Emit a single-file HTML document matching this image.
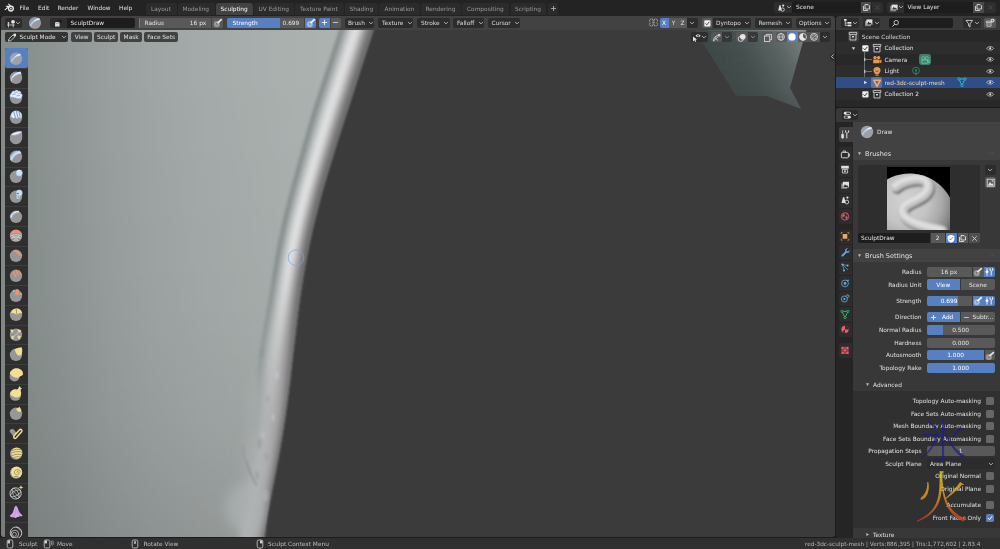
<!DOCTYPE html>
<html lang="en"><head><meta charset="utf-8"><title>Blender - Sculpting</title>
<style>
*{box-sizing:border-box;margin:0;padding:0}
html,body{width:1000px;height:549px;overflow:hidden;background:#1c1c1c}
body{font-family:"DejaVu Sans","Liberation Sans",sans-serif;font-size:5.85px;color:#e4e4e4;position:relative}
#root{position:absolute;left:0;top:0;width:1000px;height:549px;will-change:transform;overflow:hidden}
.b{position:absolute;display:block}
.t{position:absolute;white-space:nowrap;line-height:10px;height:10px;display:block}
.wm{position:absolute;white-space:nowrap;font-family:"Liberation Serif","Noto Serif CJK SC","Noto Sans CJK SC",serif;display:block}
</style></head>
<body>
<div id="root">
<div class="b" style="left:0px;top:0px;width:1000px;height:15.5px;background:#232323;border-radius:0px;"></div>
<svg class="b" style="left:4px;top:2.5px;" width="12" height="10" viewBox="0 0 12 10"><g fill="none" stroke="#e6e6e6" stroke-width="1.1" stroke-linecap="round"><path d="M1.2,6.6 L5.2,3.4 M2.6,3.4 L6.2,3.4 M4.6,1.2 L7.4,3.6"/></g><circle cx="6.9" cy="5.6" r="3.1" fill="#e6e6e6"/><circle cx="6.9" cy="5.6" r="1.7" fill="#232323"/><circle cx="6.9" cy="5.6" r="0.9" fill="#e6e6e6"/></svg>
<span class="t" style="top:2.6px;left:19.5px;color:#e0e0e0;">File</span>
<span class="t" style="top:2.6px;left:38px;color:#e0e0e0;">Edit</span>
<span class="t" style="top:2.6px;left:57.5px;color:#e0e0e0;">Render</span>
<span class="t" style="top:2.6px;left:87.5px;color:#e0e0e0;">Window</span>
<span class="t" style="top:2.6px;left:119px;color:#e0e0e0;">Help</span>
<div class="b" style="left:146px;top:3px;width:31px;height:11.6px;background:#2b2b2b;border-radius:2.5px 2.5px 0 0;"></div>
<span class="t" style="top:3.6px;left:151px;color:#999999;">Layout</span>
<div class="b" style="left:178px;top:3px;width:36.5px;height:11.6px;background:#2b2b2b;border-radius:2.5px 2.5px 0 0;"></div>
<span class="t" style="top:3.6px;left:182.5px;color:#999999;">Modeling</span>
<div class="b" style="left:216px;top:3px;width:36.5px;height:11.6px;background:#424242;border-radius:2.5px 2.5px 0 0;"></div>
<span class="t" style="top:3.6px;left:220.5px;color:#ffffff;">Sculpting</span>
<div class="b" style="left:254px;top:3px;width:40px;height:11.6px;background:#2b2b2b;border-radius:2.5px 2.5px 0 0;"></div>
<span class="t" style="top:3.6px;left:258.5px;color:#999999;">UV Editing</span>
<div class="b" style="left:295px;top:3px;width:49px;height:11.6px;background:#2b2b2b;border-radius:2.5px 2.5px 0 0;"></div>
<span class="t" style="top:3.6px;left:300px;color:#999999;">Texture Paint</span>
<div class="b" style="left:345px;top:3px;width:32.5px;height:11.6px;background:#2b2b2b;border-radius:2.5px 2.5px 0 0;"></div>
<span class="t" style="top:3.6px;left:349.5px;color:#999999;">Shading</span>
<div class="b" style="left:379px;top:3px;width:40.5px;height:11.6px;background:#2b2b2b;border-radius:2.5px 2.5px 0 0;"></div>
<span class="t" style="top:3.6px;left:384.5px;color:#999999;">Animation</span>
<div class="b" style="left:421px;top:3px;width:40px;height:11.6px;background:#2b2b2b;border-radius:2.5px 2.5px 0 0;"></div>
<span class="t" style="top:3.6px;left:425.5px;color:#999999;">Rendering</span>
<div class="b" style="left:462px;top:3px;width:47px;height:11.6px;background:#2b2b2b;border-radius:2.5px 2.5px 0 0;"></div>
<span class="t" style="top:3.6px;left:467px;color:#999999;">Compositing</span>
<div class="b" style="left:510.5px;top:3px;width:35.5px;height:11.6px;background:#2b2b2b;border-radius:2.5px 2.5px 0 0;"></div>
<span class="t" style="top:3.6px;left:515px;color:#999999;">Scripting</span>
<div class="b" style="left:547.5px;top:3px;width:10.5px;height:11.6px;background:#2b2b2b;border-radius:2.5px 2.5px 0 0;"></div>
<svg class="b" style="left:549.5px;top:5.2px;" width="7" height="7" viewBox="0 0 7 7"><path d="M3.5,1 V6 M1,3.5 H6" stroke="#bbbbbb" stroke-width="0.8" fill="none"/></svg>
<div class="b" style="left:774px;top:1.5px;width:17.5px;height:11.5px;background:#2e2e2e;border-radius:2.5px 0 0 2.5px;"></div>
<svg class="b" style="left:776px;top:2.5px;" width="10" height="10" viewBox="0 0 10 10"><path d="M2.2,7.6 L3.4,2.2 L4.6,2.2 L5.6,7.6 Z" fill="#dddddd"/><circle cx="7.2" cy="2.6" r="1.1" fill="#dddddd"/><circle cx="6.6" cy="6.6" r="1.7" fill="none" stroke="#dddddd" stroke-width="0.8"/></svg>
<svg class="b" style="left:785.5px;top:4.4px;" width="6" height="6" viewBox="0 0 6 6"><path d="M1.3,2.2 L3,3.9 L4.7,2.2" fill="none" stroke="#c8c8c8" stroke-width="0.8" stroke-linecap="round" stroke-linejoin="round"/></svg>
<div class="b" style="left:792px;top:1.5px;width:68px;height:11.5px;background:#1d1d1d;border-radius:0px;"></div>
<span class="t" style="top:2.4px;left:796px;color:#e0e0e0;">Scene</span>
<div class="b" style="left:860.5px;top:1.5px;width:10.5px;height:11.5px;background:#4a4a4a;border-radius:0px;"></div>
<svg class="b" style="left:861.5px;top:3px;" width="9" height="9" viewBox="0 0 9 9"><path d="M1.5,3 V7.5 H6" fill="none" stroke="#d8d8d8" stroke-width="0.9"/><path d="M3,1.5 H6 L7.5,3 V6 H3 Z" fill="none" stroke="#d8d8d8" stroke-width="0.9"/></svg>
<div class="b" style="left:871.5px;top:1.5px;width:11.5px;height:11.5px;background:#2e2e2e;border-radius:0 2.5px 2.5px 0;"></div>
<svg class="b" style="left:873.5px;top:4px;" width="7" height="7" viewBox="0 0 7 7"><path d="M1.5,1.5 L5.5,5.5 M5.5,1.5 L1.5,5.5" stroke="#555" stroke-width="0.8"/></svg>
<div class="b" style="left:887px;top:1.5px;width:16.5px;height:11.5px;background:#2e2e2e;border-radius:2.5px 0 0 2.5px;"></div>
<svg class="b" style="left:888.5px;top:2.5px;" width="10" height="10" viewBox="0 0 10 10"><rect x="1.2" y="3" width="6" height="5.4" fill="#888"/><rect x="2.6" y="1.6" width="6" height="5.4" fill="#e0e0e0"/><path d="M3,6.6 L4.8,3.8 L6,5.4 L6.8,4.6 L8.2,6.6 Z" fill="#2e2e2e"/></svg>
<svg class="b" style="left:897.5px;top:4.4px;" width="6" height="6" viewBox="0 0 6 6"><path d="M1.3,2.2 L3,3.9 L4.7,2.2" fill="none" stroke="#c8c8c8" stroke-width="0.8" stroke-linecap="round" stroke-linejoin="round"/></svg>
<div class="b" style="left:904px;top:1.5px;width:68.5px;height:11.5px;background:#1d1d1d;border-radius:0px;"></div>
<span class="t" style="top:2.4px;left:907.5px;color:#e0e0e0;">View Layer</span>
<div class="b" style="left:973px;top:1.5px;width:10.5px;height:11.5px;background:#4a4a4a;border-radius:0px;"></div>
<svg class="b" style="left:974px;top:3px;" width="9" height="9" viewBox="0 0 9 9"><path d="M1.5,3 V7.5 H6" fill="none" stroke="#d8d8d8" stroke-width="0.9"/><path d="M3,1.5 H6 L7.5,3 V6 H3 Z" fill="none" stroke="#d8d8d8" stroke-width="0.9"/></svg>
<div class="b" style="left:984px;top:1.5px;width:12px;height:11.5px;background:#2e2e2e;border-radius:0 2.5px 2.5px 0;"></div>
<svg class="b" style="left:986.5px;top:4px;" width="7" height="7" viewBox="0 0 7 7"><path d="M1.5,1.5 L5.5,5.5 M5.5,1.5 L1.5,5.5" stroke="#555" stroke-width="0.8"/></svg>
<div class="b" style="left:1px;top:15.5px;width:833.9px;height:14.5px;background:#424242;border-radius:3px 3px 0 0;"></div>
<div class="b" style="left:5px;top:18px;width:16.5px;height:9.8px;background:#2c2c2c;border-radius:2px;"></div>
<svg class="b" style="left:6px;top:18.5px;" width="10" height="9" viewBox="0 0 10 9"><path d="M1,6 H8.6 M1.4,4 H3.6 M2.5,3 V8.4 M7.2,5 V8.4" stroke="#dcdcdc" stroke-width="0.8" fill="none"/><circle cx="7" cy="2.8" r="1.9" fill="#e6e6e6"/></svg>
<svg class="b" style="left:15.2px;top:20.2px;" width="6" height="6" viewBox="0 0 6 6"><path d="M1.3,2.2 L3,3.9 L4.7,2.2" fill="none" stroke="#c8c8c8" stroke-width="0.8" stroke-linecap="round" stroke-linejoin="round"/></svg>
<svg class="b" style="left:28.4px;top:15.6px;" width="14" height="14" viewBox="0 0 14 14"><circle cx="7" cy="7" r="6.1" fill="#9a9a9e"/><path d="M1.6,9.8 C3.2,6 6.4,3.2 11,1.8 L12.2,3.8 C8,4.6 4.8,6.8 2.6,10.8 Z" fill="#a9cdf0"/><path d="M5.6,5.2 C7.2,3.8 9,2.8 11,2.3 L11.6,3.3 C9.4,3.7 7.4,4.3 5.6,5.2 Z" fill="#ffffff"/></svg>
<div class="b" style="left:50px;top:18px;width:16.5px;height:9.8px;background:#2e2e2e;border-radius:2px 0 0 2px;"></div>
<svg class="b" style="left:53px;top:18.8px;" width="10" height="8.5" viewBox="0 0 10 8.5"><path d="M2,7.4 V4 C2,2.6 6.6,2.6 6.6,4 V7.4 Z" fill="#dcdcdc"/><path d="M4.4,1 H8.4 V4.6" fill="#1d1d1d" stroke="#1d1d1d" stroke-width="0.5"/><path d="M2.4,5 C3.6,3.8 5.4,3.8 6.4,5" stroke="#777" stroke-width="0.6" fill="none"/></svg>
<div class="b" style="left:67px;top:18px;width:68px;height:9.8px;background:#1d1d1d;border-radius:0 2px 2px 0;"></div>
<span class="t" style="top:18.1px;left:70.5px;">SculptDraw</span>
<div class="b" style="left:138.5px;top:18px;width:72.5px;height:9.8px;background:#595959;border-radius:2px 0 0 2px;"></div>
<div class="b" style="left:138.5px;top:18px;width:1px;height:9.8px;background:#5680c2;border-radius:2px 0 0 2px;"></div>
<span class="t" style="top:18.1px;left:144.5px;">Radius</span>
<span class="t" style="top:18.1px;right:793.7px;">16 px</span>
<div class="b" style="left:211.5px;top:18px;width:11.5px;height:9.8px;background:#595959;border-radius:0 2px 2px 0;"></div>
<svg class="b" style="left:212.5px;top:18.3px;" width="10" height="9.5" viewBox="0 0 10 9.5"><circle cx="3.8" cy="6.2" r="3.1" fill="#e6e6e6" opacity="0.38"/><circle cx="3.8" cy="6.2" r="1.9" fill="none" stroke="#e6e6e6" stroke-width="0.5" opacity="0.4"/><path d="M4.7,4.8 L8.3,1.7" stroke="#e6e6e6" stroke-width="1.7" stroke-linecap="round"/><circle cx="4" cy="5.7" r="0.5" fill="#383838"/></svg>
<div class="b" style="left:226.5px;top:18px;width:77.5px;height:9.8px;background:#595959;border-radius:2px 0 0 2px;"></div>
<div class="b" style="left:226.5px;top:18px;width:53.8px;height:9.8px;background:#5680c2;border-radius:2px 0 0 2px;"></div>
<span class="t" style="top:18.1px;left:232.5px;color:#ffffff;">Strength</span>
<span class="t" style="top:18.1px;right:700.7px;">0.699</span>
<div class="b" style="left:304.7px;top:18px;width:11.5px;height:9.8px;background:#5680c2;border-radius:0 2px 2px 0;"></div>
<svg class="b" style="left:305.7px;top:18.3px;" width="10" height="9.5" viewBox="0 0 10 9.5"><circle cx="3.8" cy="6.2" r="3.1" fill="#ffffff" opacity="0.38"/><circle cx="3.8" cy="6.2" r="1.9" fill="none" stroke="#ffffff" stroke-width="0.5" opacity="0.4"/><path d="M4.7,4.8 L8.3,1.7" stroke="#ffffff" stroke-width="1.7" stroke-linecap="round"/><circle cx="4" cy="5.7" r="0.5" fill="#383838"/></svg>
<div class="b" style="left:319px;top:18px;width:11px;height:9.8px;background:#5680c2;border-radius:2px 0 0 2px;"></div>
<svg class="b" style="left:321px;top:19.4px;" width="7" height="7" viewBox="0 0 7 7"><path d="M3.5,0.8 V6.2 M0.8,3.5 H6.2" stroke="#fff" stroke-width="0.8"/></svg>
<div class="b" style="left:330.5px;top:18px;width:10.3px;height:9.8px;background:#595959;border-radius:0 2px 2px 0;"></div>
<svg class="b" style="left:332px;top:19.4px;" width="7" height="7" viewBox="0 0 7 7"><path d="M0.8,3.5 H6.2" stroke="#ddd" stroke-width="0.8"/></svg>
<div class="b" style="left:344.5px;top:18px;width:29.5px;height:9.8px;background:#2c2c2c;border-radius:2px;"></div>
<span class="t" style="top:18.1px;left:348px;color:#dddddd;">Brush</span>
<svg class="b" style="left:367.5px;top:20.3px;" width="6" height="6" viewBox="0 0 6 6"><path d="M1.3,2.2 L3,3.9 L4.7,2.2" fill="none" stroke="#c8c8c8" stroke-width="0.8" stroke-linecap="round" stroke-linejoin="round"/></svg>
<div class="b" style="left:378px;top:18px;width:35px;height:9.8px;background:#2c2c2c;border-radius:2px;"></div>
<span class="t" style="top:18.1px;left:382px;color:#dddddd;">Texture</span>
<svg class="b" style="left:406.5px;top:20.3px;" width="6" height="6" viewBox="0 0 6 6"><path d="M1.3,2.2 L3,3.9 L4.7,2.2" fill="none" stroke="#c8c8c8" stroke-width="0.8" stroke-linecap="round" stroke-linejoin="round"/></svg>
<div class="b" style="left:417px;top:18px;width:32.5px;height:9.8px;background:#2c2c2c;border-radius:2px;"></div>
<span class="t" style="top:18.1px;left:421px;color:#dddddd;">Stroke</span>
<svg class="b" style="left:443px;top:20.3px;" width="6" height="6" viewBox="0 0 6 6"><path d="M1.3,2.2 L3,3.9 L4.7,2.2" fill="none" stroke="#c8c8c8" stroke-width="0.8" stroke-linecap="round" stroke-linejoin="round"/></svg>
<div class="b" style="left:453px;top:18px;width:31px;height:9.8px;background:#2c2c2c;border-radius:2px;"></div>
<span class="t" style="top:18.1px;left:457px;color:#dddddd;">Falloff</span>
<svg class="b" style="left:477.5px;top:20.3px;" width="6" height="6" viewBox="0 0 6 6"><path d="M1.3,2.2 L3,3.9 L4.7,2.2" fill="none" stroke="#c8c8c8" stroke-width="0.8" stroke-linecap="round" stroke-linejoin="round"/></svg>
<div class="b" style="left:488px;top:18px;width:32px;height:9.8px;background:#2c2c2c;border-radius:2px;"></div>
<span class="t" style="top:18.1px;left:491.5px;color:#dddddd;">Cursor</span>
<svg class="b" style="left:513.5px;top:20.3px;" width="6" height="6" viewBox="0 0 6 6"><path d="M1.3,2.2 L3,3.9 L4.7,2.2" fill="none" stroke="#c8c8c8" stroke-width="0.8" stroke-linecap="round" stroke-linejoin="round"/></svg>
<div class="b" style="left:712.5px;top:18px;width:38px;height:9.8px;background:#2c2c2c;border-radius:0 2px 2px 0;"></div>
<span class="t" style="top:18.1px;left:716px;color:#dddddd;">Dyntopo</span>
<svg class="b" style="left:744px;top:20.3px;" width="6" height="6" viewBox="0 0 6 6"><path d="M1.3,2.2 L3,3.9 L4.7,2.2" fill="none" stroke="#c8c8c8" stroke-width="0.8" stroke-linecap="round" stroke-linejoin="round"/></svg>
<div class="b" style="left:755px;top:18px;width:36.5px;height:9.8px;background:#2c2c2c;border-radius:2px;"></div>
<span class="t" style="top:18.1px;left:758.5px;color:#dddddd;">Remesh</span>
<svg class="b" style="left:785px;top:20.3px;" width="6" height="6" viewBox="0 0 6 6"><path d="M1.3,2.2 L3,3.9 L4.7,2.2" fill="none" stroke="#c8c8c8" stroke-width="0.8" stroke-linecap="round" stroke-linejoin="round"/></svg>
<div class="b" style="left:795.5px;top:18px;width:35px;height:9.8px;background:#2c2c2c;border-radius:2px;"></div>
<span class="t" style="top:18.1px;left:799px;color:#dddddd;">Options</span>
<svg class="b" style="left:824px;top:20.3px;" width="6" height="6" viewBox="0 0 6 6"><path d="M1.3,2.2 L3,3.9 L4.7,2.2" fill="none" stroke="#c8c8c8" stroke-width="0.8" stroke-linecap="round" stroke-linejoin="round"/></svg>
<svg class="b" style="left:648px;top:18.3px;" width="11" height="9.5" viewBox="0 0 11 9.5"><path d="M5,1.4 C3.6,0.6 1.4,1 1.4,2.6 C1.4,3.6 2.2,3.8 2.2,4.6 C2.2,5.4 1.2,5.6 1.4,6.8 C1.6,8.2 3.8,8.4 5,7.4 Z M6,1.4 C7.4,0.6 9.6,1 9.6,2.6 C9.6,3.6 8.8,3.8 8.8,4.6 C8.8,5.4 9.8,5.6 9.6,6.8 C9.4,8.2 7.2,8.4 6,7.4 Z" fill="none" stroke="#d0d0d0" stroke-width="0.7" stroke-dasharray="1.2 0.5"/></svg>
<div class="b" style="left:659.5px;top:18px;width:9.2px;height:9.8px;background:#5680c2;border-radius:2px 0 0 2px;"></div>
<span class="t" style="top:18.1px;left:614.1px;width:100px;text-align:center;color:#ffffff;">X</span>
<div class="b" style="left:669.2px;top:18px;width:8.6px;height:9.8px;background:#595959;border-radius:0px;"></div>
<span class="t" style="top:18.1px;left:623.5px;width:100px;text-align:center;color:#e0e0e0;">Y</span>
<div class="b" style="left:678.3px;top:18px;width:8.4px;height:9.8px;background:#595959;border-radius:0px;"></div>
<span class="t" style="top:18.1px;left:632.5px;width:100px;text-align:center;color:#e0e0e0;">Z</span>
<div class="b" style="left:687.2px;top:18px;width:10.5px;height:9.8px;background:#2c2c2c;border-radius:0 2px 2px 0;"></div>
<svg class="b" style="left:689.4px;top:20.3px;" width="6" height="6" viewBox="0 0 6 6"><path d="M1.3,2.2 L3,3.9 L4.7,2.2" fill="none" stroke="#c8c8c8" stroke-width="0.8" stroke-linecap="round" stroke-linejoin="round"/></svg>
<div class="b" style="left:702px;top:18px;width:10px;height:9.8px;background:#595959;border-radius:2px 0 0 2px;"></div>
<svg class="b" style="left:703.7px;top:19.6px;" width="7" height="7" viewBox="0 0 7 7"><rect x="0.3" y="0.3" width="6.2" height="6.2" rx="0.8" fill="#f0f0f0"/><path d="M1.5,3.4 L2.9,4.8 L5.3,1.9" stroke="#333" stroke-width="0.9" fill="none"/></svg>
<svg class="b" style="left:1px;top:29.5px;border-radius:0 0 3px 3px" width="833.9" height="507.5" viewBox="1 29.5 833.9 507.5"><defs>
<linearGradient id="gv" gradientUnits="userSpaceOnUse" x1="0" y1="0" x2="375" y2="0"><stop offset="0.000" stop-color="#848c8a"/><stop offset="0.080" stop-color="#89918f"/><stop offset="0.160" stop-color="#8e9594"/><stop offset="0.293" stop-color="#989f9e"/><stop offset="0.400" stop-color="#9ea5a4"/><stop offset="0.533" stop-color="#a4aaa9"/><stop offset="0.800" stop-color="#aab1af"/><stop offset="1.000" stop-color="#aeb4b3"/></linearGradient>
<linearGradient id="gh" gradientUnits="userSpaceOnUse" x1="0" y1="60" x2="0" y2="540"><stop offset="0" stop-color="#000" stop-opacity="0"/><stop offset="0.5" stop-color="#000" stop-opacity="0.024"/><stop offset="0.75" stop-color="#000" stop-opacity="0.055"/><stop offset="1" stop-color="#000" stop-opacity="0.115"/></linearGradient>
<linearGradient id="gt" gradientUnits="userSpaceOnUse" x1="715" y1="85" x2="805" y2="40"><stop offset="0" stop-color="#3c4745"/><stop offset="0.4" stop-color="#465150"/><stop offset="0.75" stop-color="#5e6867"/><stop offset="1" stop-color="#7a8281"/></linearGradient>
<linearGradient id="gtf" x1="0" y1="0" x2="0" y2="1"><stop offset="0" stop-color="#fff" stop-opacity="1"/><stop offset="0.7" stop-color="#fff" stop-opacity="0.9"/><stop offset="1" stop-color="#fff" stop-opacity="0.7"/></linearGradient>
<mask id="mt"><rect x="680" y="28" width="160" height="85" fill="url(#gtf)"/></mask>
<filter id="b6" x="-50%" y="-50%" width="200%" height="200%"><feGaussianBlur stdDeviation="6"/></filter><filter id="b1" x="-20%" y="-5%" width="140%" height="110%"><feGaussianBlur stdDeviation="1.3"/></filter>
<filter id="b0" x="-5%" y="-5%" width="110%" height="110%"><feGaussianBlur stdDeviation="0.8"/></filter><filter id="b00" x="-5%" y="-5%" width="110%" height="110%"><feGaussianBlur stdDeviation="0.6"/></filter>
<clipPath id="cb"><path d="M374.3,27.0 C373.2,30.4 369.8,40.7 367.6,47.6 C365.4,54.4 363.2,61.3 361.0,68.1 C358.8,75.0 356.6,81.8 354.4,88.7 C352.2,95.5 350.0,102.4 347.7,109.2 C345.5,116.1 343.3,122.9 341.1,129.8 C338.9,136.7 336.7,143.5 334.6,150.4 C332.4,157.2 330.3,164.1 328.3,170.9 C326.2,177.8 324.2,184.6 322.3,191.5 C320.4,198.3 318.6,205.2 316.8,212.0 C315.1,218.9 313.4,225.7 311.9,232.6 C310.3,239.5 308.9,246.3 307.5,253.2 C306.2,260.0 304.9,266.9 303.7,273.7 C302.6,280.6 301.5,287.4 300.5,294.3 C299.5,301.1 298.5,308.0 297.7,314.8 C296.8,321.7 296.0,328.5 295.2,335.4 C294.3,342.3 293.6,349.1 292.8,356.0 C292.0,362.8 291.3,369.7 290.5,376.5 C289.6,383.4 288.8,390.2 287.9,397.1 C287.0,403.9 286.1,410.8 285.1,417.6 C284.1,424.5 283.0,431.3 281.8,438.2 C280.7,445.1 279.4,451.9 278.2,458.8 C276.9,465.6 275.5,472.5 274.2,479.3 C272.9,486.2 271.5,493.0 270.2,499.9 C269.0,506.7 267.7,513.6 266.7,520.4 C265.7,527.3 264.6,537.6 264.2,541.0 L-5,545 L-5,20 Z"/></clipPath>
<linearGradient id="s0" gradientUnits="userSpaceOnUse" x1="0" y1="29" x2="0" y2="538"><stop offset="0" stop-color="#808888"/><stop offset="0.45" stop-color="#808888"/><stop offset="0.6" stop-color="#8e9595"/><stop offset="0.76" stop-color="#9ba2a2"/><stop offset="1" stop-color="#9ba2a2"/></linearGradient><linearGradient id="s1" gradientUnits="userSpaceOnUse" x1="0" y1="29" x2="0" y2="538"><stop offset="0" stop-color="#8f9595"/><stop offset="0.45" stop-color="#8f9595"/><stop offset="0.6" stop-color="#989e9e"/><stop offset="0.76" stop-color="#a1a6a6"/><stop offset="1" stop-color="#a1a6a6"/></linearGradient><linearGradient id="s2" gradientUnits="userSpaceOnUse" x1="0" y1="29" x2="0" y2="538"><stop offset="0" stop-color="#a1a6a6"/><stop offset="0.45" stop-color="#a1a6a6"/><stop offset="0.6" stop-color="#a4a8a9"/><stop offset="0.76" stop-color="#a7abab"/><stop offset="1" stop-color="#a7abab"/></linearGradient><linearGradient id="s3" gradientUnits="userSpaceOnUse" x1="0" y1="29" x2="0" y2="538"><stop offset="0" stop-color="#b4b8b8"/><stop offset="0.45" stop-color="#b4b8b8"/><stop offset="0.6" stop-color="#b0b4b4"/><stop offset="0.76" stop-color="#adb0b0"/><stop offset="1" stop-color="#adb0b0"/></linearGradient><linearGradient id="s4" gradientUnits="userSpaceOnUse" x1="0" y1="29" x2="0" y2="538"><stop offset="0" stop-color="#c8cbcb"/><stop offset="0.45" stop-color="#c8cbcb"/><stop offset="0.6" stop-color="#bcbfbf"/><stop offset="0.76" stop-color="#b1b3b4"/><stop offset="1" stop-color="#b1b3b4"/></linearGradient><linearGradient id="s5" gradientUnits="userSpaceOnUse" x1="0" y1="29" x2="0" y2="538"><stop offset="0" stop-color="#d6d8d8"/><stop offset="0.45" stop-color="#d6d8d8"/><stop offset="0.6" stop-color="#c3c5c5"/><stop offset="0.76" stop-color="#b0b2b3"/><stop offset="1" stop-color="#b0b2b3"/></linearGradient><linearGradient id="s6" gradientUnits="userSpaceOnUse" x1="0" y1="29" x2="0" y2="538"><stop offset="0" stop-color="#e0e1e1"/><stop offset="0.45" stop-color="#e0e1e1"/><stop offset="0.6" stop-color="#c8c9c9"/><stop offset="0.76" stop-color="#afb1b2"/><stop offset="1" stop-color="#afb1b2"/></linearGradient><linearGradient id="s7" gradientUnits="userSpaceOnUse" x1="0" y1="29" x2="0" y2="538"><stop offset="0" stop-color="#dbdbdc"/><stop offset="0.45" stop-color="#dbdbdc"/><stop offset="0.6" stop-color="#c4c5c5"/><stop offset="0.76" stop-color="#aeaeaf"/><stop offset="1" stop-color="#aeaeaf"/></linearGradient><linearGradient id="s8" gradientUnits="userSpaceOnUse" x1="0" y1="29" x2="0" y2="538"><stop offset="0" stop-color="#d0cfd0"/><stop offset="0.45" stop-color="#d0cfd0"/><stop offset="0.6" stop-color="#bdbdbe"/><stop offset="0.76" stop-color="#ababac"/><stop offset="1" stop-color="#ababac"/></linearGradient><linearGradient id="s9" gradientUnits="userSpaceOnUse" x1="0" y1="29" x2="0" y2="538"><stop offset="0" stop-color="#b7b6b8"/><stop offset="0.45" stop-color="#b7b6b8"/><stop offset="0.6" stop-color="#afafb0"/><stop offset="0.76" stop-color="#a8a7a9"/><stop offset="1" stop-color="#a8a7a9"/></linearGradient><linearGradient id="s10" gradientUnits="userSpaceOnUse" x1="0" y1="29" x2="0" y2="538"><stop offset="0" stop-color="#9f9d9f"/><stop offset="0.45" stop-color="#9f9d9f"/><stop offset="0.6" stop-color="#a09ea0"/><stop offset="0.76" stop-color="#a1a0a2"/><stop offset="1" stop-color="#a1a0a2"/></linearGradient><linearGradient id="s11" gradientUnits="userSpaceOnUse" x1="0" y1="29" x2="0" y2="538"><stop offset="0" stop-color="#8a888a"/><stop offset="0.45" stop-color="#8a888a"/><stop offset="0.6" stop-color="#919092"/><stop offset="0.76" stop-color="#999799"/><stop offset="1" stop-color="#999799"/></linearGradient><linearGradient id="s12" gradientUnits="userSpaceOnUse" x1="0" y1="29" x2="0" y2="538"><stop offset="0" stop-color="#767476"/><stop offset="0.45" stop-color="#767476"/><stop offset="0.6" stop-color="#807e80"/><stop offset="0.76" stop-color="#8b898b"/><stop offset="1" stop-color="#8b898b"/></linearGradient><linearGradient id="s13" gradientUnits="userSpaceOnUse" x1="0" y1="29" x2="0" y2="538"><stop offset="0" stop-color="#696769"/><stop offset="0.45" stop-color="#696769"/><stop offset="0.6" stop-color="#6f6e6f"/><stop offset="0.76" stop-color="#767576"/><stop offset="1" stop-color="#767576"/></linearGradient>
</defs>
<rect x="0" y="29" width="835" height="510" fill="#3b3b3b"/>
<g mask="url(#mt)"><path d="M692,25 L808,25 L801.2,47.4 L790,87.2 L801.2,108.6 L766.5,95.6 L736,95.3 Z" fill="url(#gt)" filter="url(#b00)"/></g>
<g filter="url(#b0)"><path d="M374.3,27.0 C373.2,30.4 369.8,40.7 367.6,47.6 C365.4,54.4 363.2,61.3 361.0,68.1 C358.8,75.0 356.6,81.8 354.4,88.7 C352.2,95.5 350.0,102.4 347.7,109.2 C345.5,116.1 343.3,122.9 341.1,129.8 C338.9,136.7 336.7,143.5 334.6,150.4 C332.4,157.2 330.3,164.1 328.3,170.9 C326.2,177.8 324.2,184.6 322.3,191.5 C320.4,198.3 318.6,205.2 316.8,212.0 C315.1,218.9 313.4,225.7 311.9,232.6 C310.3,239.5 308.9,246.3 307.5,253.2 C306.2,260.0 304.9,266.9 303.7,273.7 C302.6,280.6 301.5,287.4 300.5,294.3 C299.5,301.1 298.5,308.0 297.7,314.8 C296.8,321.7 296.0,328.5 295.2,335.4 C294.3,342.3 293.6,349.1 292.8,356.0 C292.0,362.8 291.3,369.7 290.5,376.5 C289.6,383.4 288.8,390.2 287.9,397.1 C287.0,403.9 286.1,410.8 285.1,417.6 C284.1,424.5 283.0,431.3 281.8,438.2 C280.7,445.1 279.4,451.9 278.2,458.8 C276.9,465.6 275.5,472.5 274.2,479.3 C272.9,486.2 271.5,493.0 270.2,499.9 C269.0,506.7 267.7,513.6 266.7,520.4 C265.7,527.3 264.6,537.6 264.2,541.0 L-5,545 L-5,20 Z" fill="url(#gv)"/><path d="M374.3,27.0 C373.2,30.4 369.8,40.7 367.6,47.6 C365.4,54.4 363.2,61.3 361.0,68.1 C358.8,75.0 356.6,81.8 354.4,88.7 C352.2,95.5 350.0,102.4 347.7,109.2 C345.5,116.1 343.3,122.9 341.1,129.8 C338.9,136.7 336.7,143.5 334.6,150.4 C332.4,157.2 330.3,164.1 328.3,170.9 C326.2,177.8 324.2,184.6 322.3,191.5 C320.4,198.3 318.6,205.2 316.8,212.0 C315.1,218.9 313.4,225.7 311.9,232.6 C310.3,239.5 308.9,246.3 307.5,253.2 C306.2,260.0 304.9,266.9 303.7,273.7 C302.6,280.6 301.5,287.4 300.5,294.3 C299.5,301.1 298.5,308.0 297.7,314.8 C296.8,321.7 296.0,328.5 295.2,335.4 C294.3,342.3 293.6,349.1 292.8,356.0 C292.0,362.8 291.3,369.7 290.5,376.5 C289.6,383.4 288.8,390.2 287.9,397.1 C287.0,403.9 286.1,410.8 285.1,417.6 C284.1,424.5 283.0,431.3 281.8,438.2 C280.7,445.1 279.4,451.9 278.2,458.8 C276.9,465.6 275.5,472.5 274.2,479.3 C272.9,486.2 271.5,493.0 270.2,499.9 C269.0,506.7 267.7,513.6 266.7,520.4 C265.7,527.3 264.6,537.6 264.2,541.0 L-5,545 L-5,20 Z" fill="url(#gh)"/>
<g clip-path="url(#cb)"><g filter="url(#b1)"><path d="M341.8,27.0 C340.6,30.4 337.2,40.7 334.9,47.6 C332.7,54.4 330.5,61.3 328.2,68.1 C326.0,75.0 323.8,81.8 321.5,88.7 C319.3,95.5 317.0,102.4 314.9,109.2 C312.7,116.1 310.8,122.9 308.8,129.8 C306.8,136.7 304.9,143.5 303.0,150.4 C301.1,157.2 299.2,164.1 297.3,170.9 C295.4,177.8 293.5,184.6 291.7,191.5 C289.9,198.3 288.1,205.2 286.5,212.0 C284.8,218.9 283.3,225.7 281.9,232.6 C280.4,239.5 279.1,246.3 277.8,253.2 C276.6,260.0 275.5,266.9 274.4,273.7 C273.3,280.6 272.2,287.4 271.1,294.3 C269.9,301.1 268.8,308.0 267.6,314.8 C266.4,321.7 265.1,328.5 263.9,335.4 C262.8,342.3 261.5,349.1 260.7,356.0 C259.9,362.8 259.3,369.7 258.9,376.5 C258.5,383.4 258.6,390.2 258.3,397.1 C258.1,403.9 257.9,410.8 257.3,417.6 C256.8,424.5 255.9,431.3 255.0,438.2 C254.1,445.1 253.1,451.9 252.1,458.8 C251.0,465.6 249.8,472.5 248.6,479.3 C247.4,486.2 246.2,493.0 244.9,499.9 C243.6,506.7 242.1,513.6 241.0,520.4 C239.8,527.3 238.6,537.6 238.1,541.0" stroke="url(#s0)" stroke-width="2.95" fill="none"/><path d="M344.2,27.0 C343.0,30.4 339.6,40.7 337.4,47.6 C335.1,54.4 332.9,61.3 330.7,68.1 C328.4,75.0 326.2,81.8 324.0,88.7 C321.7,95.5 319.4,102.4 317.3,109.2 C315.2,116.1 313.2,122.9 311.2,129.8 C309.2,136.7 307.3,143.5 305.4,150.4 C303.4,157.2 301.5,164.1 299.6,170.9 C297.7,177.8 295.8,184.6 293.9,191.5 C292.1,198.3 290.4,205.2 288.7,212.0 C287.1,218.9 285.5,225.7 284.1,232.6 C282.6,239.5 281.3,246.3 280.0,253.2 C278.8,260.0 277.7,266.9 276.6,273.7 C275.4,280.6 274.4,287.4 273.2,294.3 C272.1,301.1 271.0,308.0 269.8,314.8 C268.6,321.7 267.4,328.5 266.2,335.4 C265.1,342.3 263.9,349.1 263.1,356.0 C262.2,362.8 261.7,369.7 261.3,376.5 C260.8,383.4 260.8,390.2 260.5,397.1 C260.2,403.9 260.0,410.8 259.4,417.6 C258.8,424.5 257.9,431.3 257.0,438.2 C256.1,445.1 255.1,451.9 254.0,458.8 C252.9,465.6 251.7,472.5 250.5,479.3 C249.3,486.2 248.0,493.0 246.8,499.9 C245.5,506.7 244.0,513.6 242.9,520.4 C241.8,527.3 240.5,537.6 240.0,541.0" stroke="url(#s1)" stroke-width="2.95" fill="none"/><path d="M346.6,27.0 C345.4,30.4 342.0,40.7 339.8,47.6 C337.5,54.4 335.3,61.3 333.1,68.1 C330.9,75.0 328.6,81.8 326.4,88.7 C324.2,95.5 321.9,102.4 319.7,109.2 C317.6,116.1 315.6,122.9 313.6,129.8 C311.6,136.7 309.6,143.5 307.7,150.4 C305.7,157.2 303.8,164.1 301.9,170.9 C300.0,177.8 298.0,184.6 296.2,191.5 C294.4,198.3 292.6,205.2 291.0,212.0 C289.3,218.9 287.8,225.7 286.3,232.6 C284.8,239.5 283.5,246.3 282.2,253.2 C281.0,260.0 279.9,266.9 278.8,273.7 C277.6,280.6 276.5,287.4 275.4,294.3 C274.3,301.1 273.2,308.0 272.0,314.8 C270.9,321.7 269.7,328.5 268.6,335.4 C267.5,342.3 266.3,349.1 265.5,356.0 C264.6,362.8 264.1,369.7 263.6,376.5 C263.1,383.4 263.1,390.2 262.7,397.1 C262.3,403.9 262.1,410.8 261.4,417.6 C260.8,424.5 259.9,431.3 259.0,438.2 C258.1,445.1 257.0,451.9 255.9,458.8 C254.8,465.6 253.6,472.5 252.4,479.3 C251.2,486.2 249.9,493.0 248.6,499.9 C247.4,506.7 245.9,513.6 244.8,520.4 C243.7,527.3 242.4,537.6 242.0,541.0" stroke="url(#s2)" stroke-width="2.95" fill="none"/><path d="M349.0,27.0 C347.8,30.4 344.4,40.7 342.2,47.6 C339.9,54.4 337.7,61.3 335.5,68.1 C333.3,75.0 331.1,81.8 328.8,88.7 C326.6,95.5 324.3,102.4 322.2,109.2 C320.0,116.1 318.0,122.9 316.0,129.8 C314.0,136.7 312.0,143.5 310.0,150.4 C308.1,157.2 306.1,164.1 304.2,170.9 C302.3,177.8 300.3,184.6 298.5,191.5 C296.7,198.3 294.9,205.2 293.2,212.0 C291.6,218.9 290.0,225.7 288.5,232.6 C287.1,239.5 285.7,246.3 284.4,253.2 C283.2,260.0 282.1,266.9 280.9,273.7 C279.8,280.6 278.7,287.4 277.6,294.3 C276.5,301.1 275.4,308.0 274.3,314.8 C273.1,321.7 271.9,328.5 270.9,335.4 C269.8,342.3 268.7,349.1 267.8,356.0 C267.0,362.8 266.4,369.7 265.9,376.5 C265.4,383.4 265.3,390.2 264.9,397.1 C264.5,403.9 264.2,410.8 263.5,417.6 C262.8,424.5 261.9,431.3 261.0,438.2 C260.0,445.1 259.0,451.9 257.9,458.8 C256.7,465.6 255.5,472.5 254.3,479.3 C253.1,486.2 251.8,493.0 250.5,499.9 C249.2,506.7 247.8,513.6 246.7,520.4 C245.6,527.3 244.4,537.6 243.9,541.0" stroke="url(#s3)" stroke-width="2.95" fill="none"/><path d="M351.4,27.0 C350.3,30.4 346.8,40.7 344.6,47.6 C342.4,54.4 340.2,61.3 337.9,68.1 C335.7,75.0 333.5,81.8 331.3,88.7 C329.0,95.5 326.7,102.4 324.6,109.2 C322.5,116.1 320.4,122.9 318.4,129.8 C316.3,136.7 314.3,143.5 312.4,150.4 C310.4,157.2 308.4,164.1 306.5,170.9 C304.6,177.8 302.6,184.6 300.8,191.5 C298.9,198.3 297.1,205.2 295.5,212.0 C293.8,218.9 292.2,225.7 290.8,232.6 C289.3,239.5 287.9,246.3 286.6,253.2 C285.4,260.0 284.2,266.9 283.1,273.7 C282.0,280.6 280.9,287.4 279.8,294.3 C278.7,301.1 277.6,308.0 276.5,314.8 C275.4,321.7 274.2,328.5 273.2,335.4 C272.1,342.3 271.0,349.1 270.2,356.0 C269.4,362.8 268.8,369.7 268.3,376.5 C267.8,383.4 267.5,390.2 267.1,397.1 C266.6,403.9 266.2,410.8 265.6,417.6 C264.9,424.5 263.9,431.3 263.0,438.2 C262.0,445.1 260.9,451.9 259.8,458.8 C258.7,465.6 257.4,472.5 256.2,479.3 C255.0,486.2 253.7,493.0 252.4,499.9 C251.1,506.7 249.7,513.6 248.6,520.4 C247.5,527.3 246.3,537.6 245.8,541.0" stroke="url(#s4)" stroke-width="2.95" fill="none"/><path d="M353.8,27.0 C352.7,30.4 349.3,40.7 347.0,47.6 C344.8,54.4 342.6,61.3 340.4,68.1 C338.1,75.0 335.9,81.8 333.7,88.7 C331.5,95.5 329.2,102.4 327.0,109.2 C324.9,116.1 322.8,122.9 320.8,129.8 C318.7,136.7 316.7,143.5 314.7,150.4 C312.7,157.2 310.7,164.1 308.8,170.9 C306.8,177.8 304.9,184.6 303.0,191.5 C301.2,198.3 299.4,205.2 297.7,212.0 C296.1,218.9 294.5,225.7 293.0,232.6 C291.5,239.5 290.1,246.3 288.8,253.2 C287.5,260.0 286.4,266.9 285.3,273.7 C284.1,280.6 283.0,287.4 281.9,294.3 C280.9,301.1 279.8,308.0 278.7,314.8 C277.6,321.7 276.5,328.5 275.5,335.4 C274.5,342.3 273.4,349.1 272.6,356.0 C271.8,362.8 271.2,369.7 270.6,376.5 C270.1,383.4 269.8,390.2 269.3,397.1 C268.8,403.9 268.3,410.8 267.6,417.6 C266.9,424.5 265.9,431.3 264.9,438.2 C264.0,445.1 262.9,451.9 261.7,458.8 C260.6,465.6 259.3,472.5 258.1,479.3 C256.9,486.2 255.5,493.0 254.3,499.9 C253.0,506.7 251.6,513.6 250.5,520.4 C249.4,527.3 248.2,537.6 247.8,541.0" stroke="url(#s5)" stroke-width="2.95" fill="none"/><path d="M356.2,27.0 C355.1,30.4 351.7,40.7 349.4,47.6 C347.2,54.4 345.0,61.3 342.8,68.1 C340.6,75.0 338.3,81.8 336.1,88.7 C333.9,95.5 331.6,102.4 329.5,109.2 C327.3,116.1 325.2,122.9 323.2,129.8 C321.1,136.7 319.1,143.5 317.0,150.4 C315.0,157.2 313.0,164.1 311.1,170.9 C309.1,177.8 307.1,184.6 305.3,191.5 C303.4,198.3 301.7,205.2 300.0,212.0 C298.3,218.9 296.7,225.7 295.2,232.6 C293.7,239.5 292.3,246.3 291.0,253.2 C289.7,260.0 288.6,266.9 287.4,273.7 C286.3,280.6 285.2,287.4 284.1,294.3 C283.0,301.1 282.0,308.0 280.9,314.8 C279.9,321.7 278.8,328.5 277.8,335.4 C276.8,342.3 275.8,349.1 275.0,356.0 C274.2,362.8 273.5,369.7 272.9,376.5 C272.4,383.4 272.0,390.2 271.5,397.1 C270.9,403.9 270.4,410.8 269.7,417.6 C268.9,424.5 267.9,431.3 266.9,438.2 C265.9,445.1 264.8,451.9 263.7,458.8 C262.5,465.6 261.2,472.5 260.0,479.3 C258.7,486.2 257.4,493.0 256.1,499.9 C254.9,506.7 253.5,513.6 252.4,520.4 C251.3,527.3 250.2,537.6 249.7,541.0" stroke="url(#s6)" stroke-width="2.95" fill="none"/><path d="M358.6,27.0 C357.5,30.4 354.1,40.7 351.9,47.6 C349.6,54.4 347.4,61.3 345.2,68.1 C343.0,75.0 340.8,81.8 338.6,88.7 C336.3,95.5 334.1,102.4 331.9,109.2 C329.7,116.1 327.6,122.9 325.6,129.8 C323.5,136.7 321.4,143.5 319.4,150.4 C317.3,157.2 315.3,164.1 313.4,170.9 C311.4,177.8 309.4,184.6 307.6,191.5 C305.7,198.3 303.9,205.2 302.2,212.0 C300.5,218.9 298.9,225.7 297.4,232.6 C295.9,239.5 294.5,246.3 293.2,253.2 C291.9,260.0 290.8,266.9 289.6,273.7 C288.5,280.6 287.4,287.4 286.3,294.3 C285.2,301.1 284.2,308.0 283.2,314.8 C282.1,321.7 281.1,328.5 280.1,335.4 C279.2,342.3 278.2,349.1 277.4,356.0 C276.5,362.8 275.9,369.7 275.3,376.5 C274.7,383.4 274.3,390.2 273.7,397.1 C273.1,403.9 272.5,410.8 271.7,417.6 C270.9,424.5 269.9,431.3 268.9,438.2 C267.9,445.1 266.8,451.9 265.6,458.8 C264.4,465.6 263.2,472.5 261.9,479.3 C260.6,486.2 259.3,493.0 258.0,499.9 C256.8,506.7 255.4,513.6 254.3,520.4 C253.2,527.3 252.1,537.6 251.6,541.0" stroke="url(#s7)" stroke-width="2.95" fill="none"/><path d="M361.0,27.0 C359.9,30.4 356.5,40.7 354.3,47.6 C352.0,54.4 349.9,61.3 347.6,68.1 C345.4,75.0 343.2,81.8 341.0,88.7 C338.8,95.5 336.5,102.4 334.3,109.2 C332.2,116.1 330.1,122.9 328.0,129.8 C325.8,136.7 323.8,143.5 321.7,150.4 C319.7,157.2 317.6,164.1 315.7,170.9 C313.7,177.8 311.7,184.6 309.8,191.5 C308.0,198.3 306.2,205.2 304.5,212.0 C302.8,218.9 301.2,225.7 299.7,232.6 C298.1,239.5 296.7,246.3 295.4,253.2 C294.1,260.0 292.9,266.9 291.8,273.7 C290.6,280.6 289.5,287.4 288.5,294.3 C287.4,301.1 286.4,308.0 285.4,314.8 C284.4,321.7 283.4,328.5 282.4,335.4 C281.5,342.3 280.5,349.1 279.7,356.0 C278.9,362.8 278.3,369.7 277.6,376.5 C277.0,383.4 276.5,390.2 275.9,397.1 C275.2,403.9 274.6,410.8 273.8,417.6 C272.9,424.5 271.9,431.3 270.9,438.2 C269.9,445.1 268.7,451.9 267.5,458.8 C266.3,465.6 265.1,472.5 263.8,479.3 C262.5,486.2 261.2,493.0 259.9,499.9 C258.6,506.7 257.3,513.6 256.2,520.4 C255.2,527.3 254.0,537.6 253.6,541.0" stroke="url(#s8)" stroke-width="2.95" fill="none"/><path d="M363.4,27.0 C362.3,30.4 358.9,40.7 356.7,47.6 C354.5,54.4 352.3,61.3 350.1,68.1 C347.9,75.0 345.6,81.8 343.4,88.7 C341.2,95.5 339.0,102.4 336.8,109.2 C334.6,116.1 332.5,122.9 330.3,129.8 C328.2,136.7 326.1,143.5 324.1,150.4 C322.0,157.2 319.9,164.1 318.0,170.9 C316.0,177.8 314.0,184.6 312.1,191.5 C310.2,198.3 308.4,205.2 306.7,212.0 C305.0,218.9 303.4,225.7 301.9,232.6 C300.4,239.5 298.9,246.3 297.6,253.2 C296.3,260.0 295.1,266.9 294.0,273.7 C292.8,280.6 291.7,287.4 290.7,294.3 C289.6,301.1 288.6,308.0 287.6,314.8 C286.6,321.7 285.7,328.5 284.7,335.4 C283.8,342.3 282.9,349.1 282.1,356.0 C281.3,362.8 280.6,369.7 279.9,376.5 C279.3,383.4 278.7,390.2 278.1,397.1 C277.4,403.9 276.7,410.8 275.8,417.6 C275.0,424.5 273.9,431.3 272.9,438.2 C271.8,445.1 270.7,451.9 269.5,458.8 C268.3,465.6 267.0,472.5 265.7,479.3 C264.4,486.2 263.0,493.0 261.8,499.9 C260.5,506.7 259.2,513.6 258.1,520.4 C257.1,527.3 255.9,537.6 255.5,541.0" stroke="url(#s9)" stroke-width="2.95" fill="none"/><path d="M365.8,27.0 C364.7,30.4 361.3,40.7 359.1,47.6 C356.9,54.4 354.7,61.3 352.5,68.1 C350.3,75.0 348.1,81.8 345.9,88.7 C343.7,95.5 341.4,102.4 339.2,109.2 C337.0,116.1 334.9,122.9 332.7,129.8 C330.6,136.7 328.5,143.5 326.4,150.4 C324.3,157.2 322.3,164.1 320.2,170.9 C318.2,177.8 316.3,184.6 314.4,191.5 C312.5,198.3 310.7,205.2 309.0,212.0 C307.3,218.9 305.6,225.7 304.1,232.6 C302.6,239.5 301.2,246.3 299.8,253.2 C298.5,260.0 297.3,266.9 296.1,273.7 C295.0,280.6 293.9,287.4 292.8,294.3 C291.8,301.1 290.8,308.0 289.9,314.8 C288.9,321.7 288.0,328.5 287.1,335.4 C286.2,342.3 285.3,349.1 284.5,356.0 C283.7,362.8 283.0,369.7 282.3,376.5 C281.6,383.4 281.0,390.2 280.2,397.1 C279.5,403.9 278.8,410.8 277.9,417.6 C277.0,424.5 275.9,431.3 274.9,438.2 C273.8,445.1 272.6,451.9 271.4,458.8 C270.2,465.6 268.9,472.5 267.6,479.3 C266.3,486.2 264.9,493.0 263.7,499.9 C262.4,506.7 261.0,513.6 260.0,520.4 C259.0,527.3 257.9,537.6 257.5,541.0" stroke="url(#s10)" stroke-width="2.95" fill="none"/><path d="M368.3,27.0 C367.1,30.4 363.8,40.7 361.5,47.6 C359.3,54.4 357.1,61.3 354.9,68.1 C352.7,75.0 350.5,81.8 348.3,88.7 C346.1,95.5 343.8,102.4 341.7,109.2 C339.5,116.1 337.3,122.9 335.1,129.8 C333.0,136.7 330.8,143.5 328.7,150.4 C326.6,157.2 324.6,164.1 322.5,170.9 C320.5,177.8 318.5,184.6 316.6,191.5 C314.8,198.3 312.9,205.2 311.2,212.0 C309.5,218.9 307.9,225.7 306.3,232.6 C304.8,239.5 303.4,246.3 302.0,253.2 C300.7,260.0 299.5,266.9 298.3,273.7 C297.1,280.6 296.1,287.4 295.0,294.3 C294.0,301.1 293.0,308.0 292.1,314.8 C291.1,321.7 290.2,328.5 289.4,335.4 C288.5,342.3 287.7,349.1 286.9,356.0 C286.1,362.8 285.4,369.7 284.6,376.5 C283.9,383.4 283.2,390.2 282.4,397.1 C281.7,403.9 280.9,410.8 279.9,417.6 C279.0,424.5 278.0,431.3 276.9,438.2 C275.8,445.1 274.6,451.9 273.3,458.8 C272.1,465.6 270.8,472.5 269.5,479.3 C268.2,486.2 266.8,493.0 265.5,499.9 C264.3,506.7 262.9,513.6 261.9,520.4 C260.9,527.3 259.8,537.6 259.4,541.0" stroke="url(#s11)" stroke-width="2.95" fill="none"/><path d="M370.7,27.0 C369.5,30.4 366.2,40.7 364.0,47.6 C361.7,54.4 359.6,61.3 357.4,68.1 C355.1,75.0 352.9,81.8 350.7,88.7 C348.5,95.5 346.3,102.4 344.1,109.2 C341.9,116.1 339.7,122.9 337.5,129.8 C335.3,136.7 333.2,143.5 331.1,150.4 C329.0,157.2 326.9,164.1 324.8,170.9 C322.8,177.8 320.8,184.6 318.9,191.5 C317.0,198.3 315.2,205.2 313.5,212.0 C311.7,218.9 310.1,225.7 308.6,232.6 C307.0,239.5 305.6,246.3 304.2,253.2 C302.9,260.0 301.6,266.9 300.5,273.7 C299.3,280.6 298.2,287.4 297.2,294.3 C296.2,301.1 295.2,308.0 294.3,314.8 C293.4,321.7 292.5,328.5 291.7,335.4 C290.8,342.3 290.0,349.1 289.2,356.0 C288.5,362.8 287.7,369.7 287.0,376.5 C286.2,383.4 285.5,390.2 284.6,397.1 C283.8,403.9 283.0,410.8 282.0,417.6 C281.0,424.5 280.0,431.3 278.8,438.2 C277.7,445.1 276.5,451.9 275.3,458.8 C274.0,465.6 272.7,472.5 271.4,479.3 C270.1,486.2 268.7,493.0 267.4,499.9 C266.2,506.7 264.8,513.6 263.8,520.4 C262.8,527.3 261.7,537.6 261.3,541.0" stroke="url(#s12)" stroke-width="2.95" fill="none"/><path d="M373.1,27.0 C372.0,30.4 368.6,40.7 366.4,47.6 C364.2,54.4 362.0,61.3 359.8,68.1 C357.6,75.0 355.4,81.8 353.2,88.7 C351.0,95.5 348.7,102.4 346.5,109.2 C344.3,116.1 342.1,122.9 339.9,129.8 C337.7,136.7 335.5,143.5 333.4,150.4 C331.3,157.2 329.2,164.1 327.1,170.9 C325.1,177.8 323.1,184.6 321.2,191.5 C319.3,198.3 317.4,205.2 315.7,212.0 C314.0,218.9 312.3,225.7 310.8,232.6 C309.2,239.5 307.8,246.3 306.4,253.2 C305.1,260.0 303.8,266.9 302.6,273.7 C301.5,280.6 300.4,287.4 299.4,294.3 C298.4,301.1 297.4,308.0 296.5,314.8 C295.6,321.7 294.8,328.5 294.0,335.4 C293.2,342.3 292.4,349.1 291.6,356.0 C290.8,362.8 290.1,369.7 289.3,376.5 C288.5,383.4 287.7,390.2 286.8,397.1 C285.9,403.9 285.0,410.8 284.0,417.6 C283.0,424.5 282.0,431.3 280.8,438.2 C279.7,445.1 278.5,451.9 277.2,458.8 C275.9,465.6 274.6,472.5 273.3,479.3 C272.0,486.2 270.6,493.0 269.3,499.9 C268.0,506.7 266.7,513.6 265.7,520.4 C264.7,527.3 263.7,537.6 263.3,541.0" stroke="url(#s13)" stroke-width="2.95" fill="none"/></g></g></g>
<g clip-path="url(#cb)"><g filter="url(#b6)"><ellipse cx="246" cy="508" rx="20" ry="26" fill="#adb1b1" opacity="0.75"/><ellipse cx="254" cy="462" rx="10" ry="34" fill="#afb3b3" opacity="0.6"/><ellipse cx="257" cy="405" rx="7" ry="30" fill="#adb2b2" opacity="0.45"/></g>
<g filter="url(#b1)"><path d="M246.5,461 C248,470 252,477 256.5,485" stroke="#838b8b" stroke-width="2" fill="none" opacity="0.6"/><path d="M243,445 C243,452 244,458 246.5,463" stroke="#8a9292" stroke-width="1.6" fill="none" opacity="0.5"/></g></g>
<g filter="url(#b1)" opacity="0.3"><ellipse cx="259.5" cy="443" rx="2.2" ry="5" fill="#7f8888"/><ellipse cx="266.5" cy="456" rx="1.8" ry="4" fill="#889090"/><ellipse cx="257" cy="475" rx="2" ry="5" fill="#7f8888"/><ellipse cx="263" cy="434" rx="2" ry="3" fill="#d0d4d4"/><ellipse cx="273" cy="417" rx="2" ry="3.5" fill="#dadcdc"/><ellipse cx="268" cy="398" rx="1.6" ry="3" fill="#8a9292"/><ellipse cx="262" cy="352" rx="1.6" ry="6" fill="#808888"/><ellipse cx="277" cy="375" rx="1.8" ry="4" fill="#e0e2e2"/><ellipse cx="266" cy="495" rx="3" ry="6" fill="#c4c8c8"/></g>
<circle cx="296" cy="257.2" r="7.8" fill="none" stroke="#7ea6dc" stroke-width="0.8" opacity="0.9"/>
<circle cx="299" cy="256.8" r="0.8" fill="#8fb4e4" opacity="0.8"/>
</svg>
<div class="b" style="left:708px;top:29.7px;width:95.5px;height:0.9px;background:linear-gradient(90deg,rgba(120,128,127,0.25),rgba(150,156,155,0.7));border-radius:0px;"></div>
<div class="b" style="left:5px;top:32px;width:62.5px;height:10px;background:rgba(44,44,44,0.93);border-radius:2px;"></div>
<svg class="b" style="left:6.5px;top:32.5px;" width="11" height="9.5" viewBox="0 0 11 9.5"><path d="M1.4,8.2 L2,5.8 L6.2,1.8 L8,3.6 L3.8,7.8 Z" fill="none" stroke="#e6e6e6" stroke-width="0.8"/><circle cx="7.8" cy="2" r="1.4" fill="#e6e6e6"/></svg>
<span class="t" style="top:32.1px;left:19.5px;color:#e6e6e6;">Sculpt Mode</span>
<svg class="b" style="left:60.5px;top:34.4px;" width="6" height="6" viewBox="0 0 6 6"><path d="M1.3,2.2 L3,3.9 L4.7,2.2" fill="none" stroke="#c8c8c8" stroke-width="0.8" stroke-linecap="round" stroke-linejoin="round"/></svg>
<div class="b" style="left:71px;top:32px;width:21.3px;height:10px;background:rgba(58,58,58,0.93);border-radius:2px;"></div>
<span class="t" style="top:32.1px;left:31.65px;width:100px;text-align:center;color:#e0e0e0;">View</span>
<div class="b" style="left:94px;top:32px;width:24.3px;height:10px;background:rgba(58,58,58,0.93);border-radius:2px;"></div>
<span class="t" style="top:32.1px;left:56.15px;width:100px;text-align:center;color:#e0e0e0;">Sculpt</span>
<div class="b" style="left:120px;top:32px;width:22.3px;height:10px;background:rgba(58,58,58,0.93);border-radius:2px;"></div>
<span class="t" style="top:32.1px;left:81.15px;width:100px;text-align:center;color:#e0e0e0;">Mask</span>
<div class="b" style="left:144px;top:32px;width:34.3px;height:10px;background:rgba(58,58,58,0.93);border-radius:2px;"></div>
<span class="t" style="top:32.1px;left:111.15px;width:100px;text-align:center;color:#e0e0e0;">Face Sets</span>
<div class="b" style="left:690.5px;top:32px;width:17px;height:10px;background:rgba(44,44,44,0.93);border-radius:2px;"></div>
<svg class="b" style="left:691.5px;top:32.5px;" width="10" height="9.5" viewBox="0 0 10 9.5"><path d="M1,3.6 L1,8.4 L2.4,7.2 L3.4,9 L4.2,8.6 L3.4,6.8 L5,6.6 Z" fill="#e6e6e6"/><path d="M3.6,2.8 C4.6,1 7.4,1 8.6,2.8 C7.4,4.6 4.6,4.6 3.6,2.8 Z" fill="#e6e6e6"/><circle cx="6.1" cy="2.8" r="0.9" fill="#2c2c2c"/></svg>
<svg class="b" style="left:700.7px;top:34.4px;" width="6" height="6" viewBox="0 0 6 6"><path d="M1.3,2.2 L3,3.9 L4.7,2.2" fill="none" stroke="#c8c8c8" stroke-width="0.8" stroke-linecap="round" stroke-linejoin="round"/></svg>
<div class="b" style="left:711px;top:32px;width:10.7px;height:10px;background:rgba(88,88,88,0.9);border-radius:2px 0 0 2px;"></div>
<svg class="b" style="left:711.5px;top:32.5px;" width="10" height="9.5" viewBox="0 0 10 9.5"><path d="M1.5,8 A6,6 0 0 1 7.5,2" fill="none" stroke="#e6e6e6" stroke-width="0.8"/><path d="M1.5,8 L8,1.6 M8,1.6 L6,1.8 M8,1.6 L7.8,3.6" stroke="#e6e6e6" stroke-width="0.8" fill="none"/><path d="M3,4.6 A4.4,4.4 0 0 1 5.4,7.6" fill="none" stroke="#e6e6e6" stroke-width="0.7"/></svg>
<div class="b" style="left:722.2px;top:32px;width:10px;height:10px;background:rgba(52,52,52,0.85);border-radius:0 2px 2px 0;"></div>
<svg class="b" style="left:724.2px;top:34.4px;" width="6" height="6" viewBox="0 0 6 6"><path d="M1.3,2.2 L3,3.9 L4.7,2.2" fill="none" stroke="#9a9a9a" stroke-width="0.8" stroke-linecap="round" stroke-linejoin="round"/></svg>
<div class="b" style="left:736px;top:32px;width:11px;height:10px;background:rgba(88,88,88,0.9);border-radius:2px 0 0 2px;"></div>
<svg class="b" style="left:736.5px;top:32.5px;" width="10" height="9.5" viewBox="0 0 10 9.5"><circle cx="3.8" cy="5.8" r="2.6" fill="none" stroke="#e6e6e6" stroke-width="0.8"/><circle cx="5.8" cy="3.8" r="2.8" fill="#e6e6e6"/></svg>
<div class="b" style="left:747.5px;top:32px;width:10.5px;height:10px;background:rgba(52,52,52,0.85);border-radius:0 2px 2px 0;"></div>
<svg class="b" style="left:749.7px;top:34.4px;" width="6" height="6" viewBox="0 0 6 6"><path d="M1.3,2.2 L3,3.9 L4.7,2.2" fill="none" stroke="#9a9a9a" stroke-width="0.8" stroke-linecap="round" stroke-linejoin="round"/></svg>
<div class="b" style="left:762px;top:32px;width:11px;height:10px;background:rgba(88,88,88,0.9);border-radius:2px;"></div>
<svg class="b" style="left:762.5px;top:32.5px;" width="10" height="9.5" viewBox="0 0 10 9.5"><rect x="1.4" y="3" width="5.4" height="5.4" fill="none" stroke="#e6e6e6" stroke-width="0.8"/><path d="M3.2,3 V1.4 H8.6 V6.8 H6.8" fill="none" stroke="#e6e6e6" stroke-width="0.8"/></svg>
<div class="b" style="left:776px;top:32px;width:10.7px;height:10px;background:rgba(88,88,88,0.9);border-radius:2px 0 0 2px;"></div>
<svg class="b" style="left:776.4px;top:32.2px;" width="10" height="10" viewBox="0 0 10 10"><circle cx="5" cy="4.9" r="3.4" fill="none" stroke="#e6e6e6" stroke-width="0.8"/><ellipse cx="5" cy="4.9" rx="1.5" ry="3.4" fill="none" stroke="#e6e6e6" stroke-width="0.6"/><path d="M1.6,4.9 H8.4" stroke="#e6e6e6" stroke-width="0.6"/></svg>
<div class="b" style="left:787px;top:32px;width:10.7px;height:10px;background:#5680c2;border-radius:0px;"></div>
<svg class="b" style="left:787.4px;top:32.2px;" width="10" height="10" viewBox="0 0 10 10"><circle cx="5" cy="4.9" r="3.7" fill="#ffffff"/></svg>
<div class="b" style="left:798px;top:32px;width:10.7px;height:10px;background:rgba(88,88,88,0.9);border-radius:0px;"></div>
<svg class="b" style="left:798.4px;top:32.2px;" width="10" height="10" viewBox="0 0 10 10"><circle cx="5" cy="4.9" r="3.5" fill="none" stroke="#e6e6e6" stroke-width="0.8"/><path d="M5,4.9 V1.4 A3.5,3.5 0 0 0 1.5,4.9 Z M5,4.9 L7.6,7.3 A3.5,3.5 0 0 1 1.5,4.9 Z" fill="#e6e6e6"/></svg>
<div class="b" style="left:809px;top:32px;width:10.7px;height:10px;background:rgba(88,88,88,0.9);border-radius:0px;"></div>
<svg class="b" style="left:809.4px;top:32.2px;" width="10" height="10" viewBox="0 0 10 10"><circle cx="5" cy="4.9" r="3.5" fill="none" stroke="#e6e6e6" stroke-width="0.8"/><circle cx="5" cy="4.9" r="2.2" fill="none" stroke="#c8c8c8" stroke-width="0.7"/><path d="M3.4,6.4 L6.6,3.4" stroke="#e6e6e6" stroke-width="0.6"/></svg>
<div class="b" style="left:820.2px;top:32px;width:10.3px;height:10px;background:rgba(44,44,44,0.93);border-radius:0 2px 2px 0;"></div>
<svg class="b" style="left:822.4px;top:34.4px;" width="6" height="6" viewBox="0 0 6 6"><path d="M1.3,2.2 L3,3.9 L4.7,2.2" fill="none" stroke="#c8c8c8" stroke-width="0.8" stroke-linecap="round" stroke-linejoin="round"/></svg>
<div class="b" style="left:829.5px;top:52.5px;width:5.5px;height:8px;background:rgba(40,40,40,0.6);border-radius:3px 0 0 3px;"></div>
<svg class="b" style="left:830.3px;top:53px;" width="5" height="7" viewBox="0 0 5 7"><path d="M3.6,1.4 L1.4,3.5 L3.6,5.6" fill="none" stroke="#c8c8c8" stroke-width="0.9"/></svg>
<div class="b" style="left:4.5px;top:48px;width:23.5px;height:489.5px;background:#2f2f2f;border-radius:2px 2px 0 0;"></div>
<div class="b" style="left:4.5px;top:48px;width:23.5px;height:19.8px;background:#5680c2;border-radius:2px;"></div>
<svg class="b" style="left:7.8px;top:49.5px;" width="16" height="17.2" viewBox="0 0 16 17.2"><circle cx="8" cy="8.8" r="6.2" fill="#a0a0a6"/><path d="M2.6,11.6 C4.2,7.8 7.4,5 12,3.6 L13.2,5.6 C9,6.4 5.8,8.6 3.6,12.6 Z" fill="#a9cdf0"/><path d="M6.6,7 C8.2,5.6 10,4.6 12,4.1 L12.6,5.1 C10.4,5.5 8.4,6.1 6.6,7 Z" fill="#ffffff"/></svg>
<div class="b" style="left:4.5px;top:67.75px;width:23.5px;height:0.6px;background:#3d3d3d;border-radius:0px;"></div>
<svg class="b" style="left:7.8px;top:69.25px;" width="16" height="17.2" viewBox="0 0 16 17.2"><circle cx="8" cy="8.8" r="6.2" fill="#979797"/><path d="M2.8,12 C3.2,7.4 6.8,3.6 12.6,2.6 L13.6,5.6 C9,5.2 5.2,7.4 3.6,12.4 Z" fill="#e4eefa"/><path d="M3.4,11.6 C4.8,7.6 8.4,5.2 13.2,5" stroke="#7d9cc4" stroke-width="0.8" fill="none"/></svg>
<div class="b" style="left:4.5px;top:87.5px;width:23.5px;height:0.6px;background:#3d3d3d;border-radius:0px;"></div>
<svg class="b" style="left:7.8px;top:89px;" width="16" height="17.2" viewBox="0 0 16 17.2"><circle cx="8" cy="8.8" r="6.2" fill="#979797"/><path d="M2,7.6 C1.6,5.6 2.6,4.6 3.6,4 C3.4,2.6 5,1.6 6.4,2.2 C7.4,0.8 9.6,0.8 10.4,2 C12,1.6 13.4,2.8 13,4.4 C14.6,5 14.8,7 13.6,8 C13.8,9.6 12,10.4 10.8,9.4 C9.8,10.2 8.4,9.8 8,8.8 C6.8,9.6 5.4,9 5.2,8 C4,8.6 2.4,8.6 2,7.6 Z" fill="#e4eefa" stroke="#6f8fbe" stroke-width="0.5"/><path d="M4.2,5.6 C5.4,4.4 6.6,6 7.8,4.8 M8.4,7 C9.6,6 10.6,7.4 12,6.4 M6.4,3.4 C7.6,2.8 8.6,3.8 10,3 M10.6,4.6 C11.4,4.2 12,4.8 12.6,4.6" stroke="#6f8fbe" stroke-width="0.7" fill="none"/></svg>
<div class="b" style="left:4.5px;top:107.25px;width:23.5px;height:0.6px;background:#3d3d3d;border-radius:0px;"></div>
<svg class="b" style="left:7.8px;top:108.75px;" width="16" height="17.2" viewBox="0 0 16 17.2"><circle cx="8" cy="8.8" r="6.2" fill="#979797"/><path d="M3,8 C2.4,5 4,2.6 6.6,2 C9,1.2 12,2 13.4,4.4 C14.4,6.4 13.8,8.4 13,9.4 L10.6,8.4 L9.4,10 L7.4,8.6 L5.6,9.6 Z" fill="#e4eefa" stroke="#6f8fbe" stroke-width="0.4"/><path d="M5.8,3 L7.4,8.4 M8.4,2 L9.8,8.6 M11,2.6 L12.2,8.4" stroke="#6f8fbe" stroke-width="0.9" fill="none"/></svg>
<div class="b" style="left:4.5px;top:127px;width:23.5px;height:0.6px;background:#3d3d3d;border-radius:0px;"></div>
<svg class="b" style="left:7.8px;top:128.5px;" width="16" height="17.2" viewBox="0 0 16 17.2"><path d="M1.9,8 C2.2,4.6 5.4,3.2 8,3.2 C11,3 13.6,2 14,3.4 C14.4,6 14.2,7.4 14.2,8.8 A6.2,6.2 0 1 1 1.9,8 Z" fill="#979797"/><path d="M3,5.6 C5,3.6 10.6,1.8 13.6,2.4 C14.4,3.4 10.4,5.8 5.4,6.4 C4.2,6.4 3.2,6.2 3,5.6 Z" fill="#e4eefa" stroke="#7d9cc4" stroke-width="0.5"/></svg>
<div class="b" style="left:4.5px;top:146.75px;width:23.5px;height:0.6px;background:#3d3d3d;border-radius:0px;"></div>
<svg class="b" style="left:7.8px;top:148.25px;" width="16" height="17.2" viewBox="0 0 16 17.2"><circle cx="8" cy="8.8" r="6.2" fill="#979797"/><path d="M2,10.6 C3.2,6 7.4,2.6 11.6,2.6 L13.8,5.6 C9.6,5.6 5.4,8.6 3.6,13.6 Z" fill="#a9cdf0"/><path d="M2.8,12.2 C4.4,7.6 8.4,4.2 12.8,4.2" stroke="#e4eefa" stroke-width="0.9" fill="none"/></svg>
<div class="b" style="left:4.5px;top:166.5px;width:23.5px;height:0.6px;background:#3d3d3d;border-radius:0px;"></div>
<svg class="b" style="left:7.8px;top:168px;" width="16" height="17.2" viewBox="0 0 16 17.2"><circle cx="8" cy="8.8" r="6.2" fill="#979797"/><circle cx="11.2" cy="5" r="3.3" fill="#cfe0f4" stroke="#7d9cc4" stroke-width="0.4"/><path d="M9.2,4 A2.4,2.4 0 0 1 11.6,2.4" stroke="#fff" stroke-width="0.7" fill="none"/></svg>
<div class="b" style="left:4.5px;top:186.25px;width:23.5px;height:0.6px;background:#3d3d3d;border-radius:0px;"></div>
<svg class="b" style="left:7.8px;top:187.75px;" width="16" height="17.2" viewBox="0 0 16 17.2"><circle cx="8" cy="8.8" r="6.2" fill="#979797"/><circle cx="11.2" cy="5" r="3.2" fill="#cfe0f4" stroke="#7d9cc4" stroke-width="0.4"/><circle cx="10.2" cy="9" r="2" fill="#cfe0f4" stroke="#7d9cc4" stroke-width="0.4"/><path d="M8.6,5.4 H11 M9.6,9 H11.2" stroke="#5a5a5a" stroke-width="0.8"/></svg>
<div class="b" style="left:4.5px;top:206px;width:23.5px;height:0.6px;background:#3d3d3d;border-radius:0px;"></div>
<svg class="b" style="left:7.8px;top:207.5px;" width="16" height="17.2" viewBox="0 0 16 17.2"><circle cx="8" cy="8.8" r="6.2" fill="#979797"/><path d="M2.8,9.6 C3.8,6 6.8,3.6 11,3.4" stroke="#e4eefa" stroke-width="1.1" fill="none"/><path d="M3.6,10.4 C4.6,7 7.4,4.8 11.4,4.4" stroke="#a9cdf0" stroke-width="0.6" fill="none"/></svg>
<div class="b" style="left:4.5px;top:225.75px;width:23.5px;height:0.6px;background:#3d3d3d;border-radius:0px;"></div>
<svg class="b" style="left:7.8px;top:227.25px;" width="16" height="17.2" viewBox="0 0 16 17.2"><circle cx="8" cy="8.8" r="6.2" fill="#979797"/><path d="M1.9,8 A6.2,6.2 0 0 1 14.1,8 C12,5.8 4,5.8 1.9,8 Z" fill="#e8937a"/><path d="M2.2,9.4 C5,7.2 11,7.2 13.8,9.4 M2.8,11.4 C5.4,9.4 10.6,9.4 13.2,11.4 M4.4,8.6 L7.4,11.6 M11.6,8.6 L8.6,11.6 M5.4,13.6 C7,12.6 9,12.6 10.6,13.6" stroke="#e8e8e8" stroke-width="0.7" fill="none"/></svg>
<div class="b" style="left:4.5px;top:245.5px;width:23.5px;height:0.6px;background:#3d3d3d;border-radius:0px;"></div>
<svg class="b" style="left:7.8px;top:247px;" width="16" height="17.2" viewBox="0 0 16 17.2"><circle cx="8" cy="8.8" r="6.2" fill="#979797"/><path d="M5.4,3.2 C8.6,2.6 13,5.6 13.8,9.6 C11,8.2 7.6,5.6 5.4,3.2 Z" fill="#e8937a"/></svg>
<div class="b" style="left:4.5px;top:265.25px;width:23.5px;height:0.6px;background:#3d3d3d;border-radius:0px;"></div>
<svg class="b" style="left:7.8px;top:266.75px;" width="16" height="17.2" viewBox="0 0 16 17.2"><circle cx="8" cy="8.8" r="6.2" fill="#979797"/><path d="M4.4,5.6 L5.8,4.4 L8.8,9.8 L7.8,10.4 Z M7.2,3.6 L8.8,3 L11.2,8.4 L10,9 Z M10.2,3.6 L11.6,3.6 L13.4,7.4 L12.4,8 Z" fill="#e8937a"/></svg>
<div class="b" style="left:4.5px;top:285px;width:23.5px;height:0.6px;background:#3d3d3d;border-radius:0px;"></div>
<svg class="b" style="left:7.8px;top:286.5px;" width="16" height="17.2" viewBox="0 0 16 17.2"><circle cx="8" cy="8.8" r="6.2" fill="#979797"/><path d="M7,7.8 L8,2.6 C9.4,1.8 11,2.4 11.4,3.8 L10.4,8.6 Z" fill="#e8937a"/><path d="M4.6,3.4 L6.2,2.4 L6.8,4.4 L5.4,5 Z M11.8,6 L13.8,5.8 L13.4,7.8 L11.8,7.6 Z" fill="#b8b8b8"/></svg>
<div class="b" style="left:4.5px;top:304.75px;width:23.5px;height:0.6px;background:#3d3d3d;border-radius:0px;"></div>
<svg class="b" style="left:7.8px;top:306.25px;" width="16" height="17.2" viewBox="0 0 16 17.2"><circle cx="8" cy="8.8" r="6.2" fill="#979797"/><path d="M2.6,6.8 C4,3.6 7.4,2 10.6,2.8 C12.6,3.6 13.8,5.2 14.2,7.2 C12,6.6 10.2,7.4 9,9.4 C7.6,7.6 5,6.4 2.6,6.8 Z" fill="#f3df92"/><path d="M8.2,3 L9,9.2" stroke="#6a6a4a" stroke-width="0.6"/></svg>
<div class="b" style="left:4.5px;top:324.5px;width:23.5px;height:0.6px;background:#3d3d3d;border-radius:0px;"></div>
<svg class="b" style="left:7.8px;top:326px;" width="16" height="17.2" viewBox="0 0 16 17.2"><circle cx="8" cy="8.8" r="6.2" fill="#979797"/><path d="M2.4,3.2 L5.6,4 L4.6,6.8 L2.8,6 Z M9.6,3 L13.4,4.4 L12.6,6.4 L10.4,6 Z M3,10.4 L5.4,10 L5.8,13.2 L3.8,12.6 Z M9.6,9.4 L12.6,10 L11.6,13 L9.8,12.4 Z" fill="#f3df92"/><path d="M3.4,12.6 L12.4,4.4" stroke="#d8d8d8" stroke-width="0.7"/></svg>
<div class="b" style="left:4.5px;top:344.25px;width:23.5px;height:0.6px;background:#3d3d3d;border-radius:0px;"></div>
<svg class="b" style="left:7.8px;top:345.75px;" width="16" height="17.2" viewBox="0 0 16 17.2"><circle cx="8" cy="8.8" r="6.2" fill="#979797"/><path d="M6.6,3.4 C9,1.6 12,1.4 13.6,1.2 C14.6,3.6 14.6,6.4 13.2,9 C11,10.4 8.6,9.6 6.6,3.4 Z" fill="#f3df92"/></svg>
<div class="b" style="left:4.5px;top:364px;width:23.5px;height:0.6px;background:#3d3d3d;border-radius:0px;"></div>
<svg class="b" style="left:7.8px;top:365.5px;" width="16" height="17.2" viewBox="0 0 16 17.2"><circle cx="6.6" cy="10.4" r="5" fill="#979797"/><path d="M1.8,7.6 C2.6,3.6 7,1.6 10.6,2.6 C13.6,3.6 15.4,6 15,8.4 C14,10.4 11.8,9.6 10.8,11.4 C9,12.6 4.4,11.6 1.8,7.6 Z" fill="#f3df92"/></svg>
<div class="b" style="left:4.5px;top:383.75px;width:23.5px;height:0.6px;background:#3d3d3d;border-radius:0px;"></div>
<svg class="b" style="left:7.8px;top:385.25px;" width="16" height="17.2" viewBox="0 0 16 17.2"><circle cx="7.4" cy="10.2" r="5.6" fill="#979797"/><path d="M2,8.6 C2.6,5.6 5.6,3.6 8.6,4.4 C9.8,4.4 10.4,3.6 10.6,2.4 L11.8,1 L12.4,2.6 L14,3.4 L12.6,4.4 C12.6,6 13.6,7.4 13,9.6 C12.4,12 9.4,13.2 7,12.2 C4.4,11.6 2.6,10.4 2,8.6 Z" fill="#f3df92"/></svg>
<div class="b" style="left:4.5px;top:403.5px;width:23.5px;height:0.6px;background:#3d3d3d;border-radius:0px;"></div>
<svg class="b" style="left:7.8px;top:405px;" width="16" height="17.2" viewBox="0 0 16 17.2"><circle cx="8" cy="8.8" r="6.2" fill="#979797"/><path d="M8,3.4 C9.4,3.8 10.6,3 11.2,1.6 L12.4,3.2 C13.6,4.4 13.6,5.8 12.6,6.8 C11,7.4 8.8,6.4 8,3.4 Z" fill="#f3df92"/></svg>
<div class="b" style="left:4.5px;top:423.25px;width:23.5px;height:0.6px;background:#3d3d3d;border-radius:0px;"></div>
<svg class="b" style="left:7.8px;top:424.75px;" width="16" height="17.2" viewBox="0 0 16 17.2"><path d="M1.6,6.4 C1.6,3.8 5,3 6.6,5.4 L9,8.6 L5.8,12 Z" fill="#979797"/><path d="M6,11 L11.6,4.8 C12.8,3.6 14.8,5.4 13.6,6.8 L8,13 C6.8,14.2 4.8,12.4 6,11 Z" fill="#2b2b2b" stroke="#f3df92" stroke-width="1.5"/></svg>
<div class="b" style="left:4.5px;top:443px;width:23.5px;height:0.6px;background:#3d3d3d;border-radius:0px;"></div>
<svg class="b" style="left:7.8px;top:444.5px;" width="16" height="17.2" viewBox="0 0 16 17.2"><circle cx="8" cy="8.8" r="6" fill="#979797"/><circle cx="8.8" cy="8" r="5.6" fill="#f3df92"/><path d="M3.8,6 C6.4,4.2 10.4,3.6 13.2,5 M3.2,8.4 C6.4,6.4 11,6 14.2,7.4 M3.8,10.8 C6.6,9 11,8.8 14,10 M5.6,12.8 C7.6,11.6 10.6,11.4 12.6,12" stroke="#8a8058" stroke-width="0.8" fill="none"/></svg>
<div class="b" style="left:4.5px;top:462.75px;width:23.5px;height:0.6px;background:#3d3d3d;border-radius:0px;"></div>
<svg class="b" style="left:7.8px;top:464.25px;" width="16" height="17.2" viewBox="0 0 16 17.2"><circle cx="8" cy="8.8" r="6" fill="#979797"/><circle cx="8.6" cy="8.2" r="5.6" fill="#f3df92"/><path d="M8.8,8.6 C8.8,7 11,7.2 11,9 C11,11.4 6.6,11.6 6.4,8.4 C6.2,5 11.8,4.6 12.8,8.4 M6,12.6 H10.4" stroke="#8a8058" stroke-width="0.8" fill="none"/></svg>
<div class="b" style="left:4.5px;top:482.5px;width:23.5px;height:0.6px;background:#3d3d3d;border-radius:0px;"></div>
<svg class="b" style="left:7.8px;top:484px;" width="16" height="17.2" viewBox="0 0 16 17.2"><circle cx="7.6" cy="9.4" r="5.6" fill="none" stroke="#e6e6e6" stroke-width="0.8"/><ellipse cx="7.6" cy="9.4" rx="2.6" ry="5.6" fill="none" stroke="#e6e6e6" stroke-width="0.6" transform="rotate(-30 7.6 9.4)"/><ellipse cx="7.6" cy="9.4" rx="5.6" ry="2.4" fill="none" stroke="#e6e6e6" stroke-width="0.6" transform="rotate(-30 7.6 9.4)"/><path d="M3.6,5.4 L11.6,13.4" stroke="#e6e6e6" stroke-width="0.6"/><path d="M13,1 L13.6,2.8 L15.4,3.4 L13.6,4 L13,5.8 L12.4,4 L10.6,3.4 L12.4,2.8 Z" fill="#f3df92"/></svg>
<div class="b" style="left:4.5px;top:502.25px;width:23.5px;height:0.6px;background:#3d3d3d;border-radius:0px;"></div>
<svg class="b" style="left:7.8px;top:503.75px;" width="16" height="17.2" viewBox="0 0 16 17.2"><path d="M8,1.8 C9.2,2 9.8,4.4 10.8,7 C11.8,9.6 14.4,10.6 14.6,11.8 C13.4,13 12.2,11.6 11.2,12.6 C10.2,13.6 9.6,12.6 8.6,13.6 C7.6,14.8 6.6,12.8 5.4,13.2 C4,13.6 2.4,13 1.6,11.8 C3,10.6 4.6,9.6 5.4,7 C6.2,4.4 6.8,1.8 8,1.8 Z" fill="#d4a8ec"/><path d="M8,3 C8,7 7,10 6,12.6 M9,6 C9.6,9 10.6,11 12,12" stroke="#b88cd4" stroke-width="0.6" fill="none"/></svg>
<div class="b" style="left:4.5px;top:522px;width:23.5px;height:0.6px;background:#3d3d3d;border-radius:0px;"></div>
<svg class="b" style="left:7.8px;top:523.5px;" width="16" height="17.2" viewBox="0 0 16 17.2"><circle cx="8" cy="8.8" r="5.8" fill="none" stroke="#e6e6e6" stroke-width="0.8"/><circle cx="6.8" cy="10" r="3.8" fill="none" stroke="#e6e6e6" stroke-width="0.7"/><circle cx="6.4" cy="10.4" r="2" fill="none" stroke="#e6e6e6" stroke-width="0.6"/><path d="M8,3 C10,4 12,6 13.6,8" stroke="#e6e6e6" stroke-width="0.6" fill="none"/></svg>
<div class="b" style="left:836px;top:15.5px;width:164px;height:14.5px;background:#3a3a3a;border-radius:3px 0 0 0;"></div>
<div class="b" style="left:836px;top:29.5px;width:164px;height:77.2px;background:#282828;border-radius:0 0 0 3px;"></div>
<div class="b" style="left:836px;top:42.25px;width:164px;height:11.5px;background:#2d2d2d;border-radius:0px;"></div>
<div class="b" style="left:836px;top:65.25px;width:164px;height:11.5px;background:#2d2d2d;border-radius:0px;"></div>
<div class="b" style="left:836px;top:88.25px;width:164px;height:11.5px;background:#2d2d2d;border-radius:0px;"></div>
<div class="b" style="left:841px;top:18px;width:17.5px;height:9.8px;background:#2c2c2c;border-radius:2px;"></div>
<svg class="b" style="left:842.5px;top:18.4px;" width="10" height="9.5" viewBox="0 0 10 9.5"><rect x="1" y="1" width="2.6" height="1.8" fill="#e6e6e6"/><path d="M2.2,3 V7.4 H4 M2.2,5 H4" stroke="#e6e6e6" stroke-width="0.7" fill="none"/><rect x="4.4" y="4" width="4" height="1.7" fill="#e6e6e6"/><rect x="4.4" y="6.6" width="4" height="1.7" fill="#e6e6e6"/></svg>
<svg class="b" style="left:852px;top:20.3px;" width="6" height="6" viewBox="0 0 6 6"><path d="M1.3,2.2 L3,3.9 L4.7,2.2" fill="none" stroke="#c8c8c8" stroke-width="0.8" stroke-linecap="round" stroke-linejoin="round"/></svg>
<div class="b" style="left:862.5px;top:18px;width:17px;height:9.8px;background:#2c2c2c;border-radius:2px;"></div>
<svg class="b" style="left:864px;top:18.4px;" width="10" height="9.5" viewBox="0 0 10 9.5"><rect x="1" y="2.8" width="6" height="5.4" fill="#888"/><rect x="2.4" y="1.4" width="6" height="5.4" fill="#e0e0e0"/><path d="M2.8,6.4 L4.6,3.6 L5.8,5.2 L6.6,4.4 L8,6.4 Z" fill="#2c2c2c"/></svg>
<svg class="b" style="left:873.5px;top:20.3px;" width="6" height="6" viewBox="0 0 6 6"><path d="M1.3,2.2 L3,3.9 L4.7,2.2" fill="none" stroke="#c8c8c8" stroke-width="0.8" stroke-linecap="round" stroke-linejoin="round"/></svg>
<div class="b" style="left:889px;top:18px;width:63.5px;height:9.8px;background:#1d1d1d;border-radius:2px;"></div>
<svg class="b" style="left:890.5px;top:18.6px;" width="9" height="9" viewBox="0 0 9 9"><circle cx="5.2" cy="3.6" r="2.2" fill="none" stroke="#e6e6e6" stroke-width="0.8"/><path d="M3.6,5.2 L1.4,7.6" stroke="#e6e6e6" stroke-width="0.9"/></svg>
<div class="b" style="left:963px;top:18px;width:17.5px;height:9.8px;background:#2c2c2c;border-radius:2px;"></div>
<svg class="b" style="left:964.5px;top:18.6px;" width="9" height="9" viewBox="0 0 9 9"><path d="M1,1.4 H7.6 L5,4.8 V8 L3.6,7 V4.8 Z" fill="none" stroke="#e6e6e6" stroke-width="0.8" stroke-linejoin="round"/></svg>
<svg class="b" style="left:974.2px;top:20.3px;" width="6" height="6" viewBox="0 0 6 6"><path d="M1.3,2.2 L3,3.9 L4.7,2.2" fill="none" stroke="#c8c8c8" stroke-width="0.8" stroke-linecap="round" stroke-linejoin="round"/></svg>
<div class="b" style="left:984px;top:18px;width:11.5px;height:9.8px;background:#595959;border-radius:2px;"></div>
<svg class="b" style="left:985px;top:18.4px;" width="10" height="9.5" viewBox="0 0 10 9.5"><path d="M1.4,3.2 H6.4 V4.4 H1.4 Z M2,4.4 V8.2 H6 V4.4" fill="none" stroke="#e6e6e6" stroke-width="0.7"/><path d="M3.2,6 H4.8" stroke="#e6e6e6" stroke-width="0.7"/><circle cx="7.6" cy="2.6" r="1.9" fill="#e6e6e6"/><path d="M7.6,1.5 V3.7 M6.5,2.6 H8.7" stroke="#595959" stroke-width="0.6"/></svg>
<div class="b" style="left:847.8px;top:31px;width:10.8px;height:10.8px;background:#3c3c3c;border-radius:2px;"></div>
<svg class="b" style="left:848.2px;top:31.3px;" width="10" height="10.4" viewBox="0 0 10 10.4"><path d="M1.2,1.4 H8.8 V3.4 H1.2 Z M2,3.4 V9 H8 V3.4" fill="none" stroke="#dcdcdc" stroke-width="0.8"/><rect x="4" y="5" width="2" height="1.4" fill="#dcdcdc"/></svg>
<span class="t" style="top:31.6px;left:861.7px;color:#d8d8d8;">Scene Collection</span>
<svg class="b" style="left:851px;top:45.5px;" width="5" height="5" viewBox="0 0 5 5"><path d="M0.8,1.2 H4.2 L2.5,4 Z" fill="#d0d0d0"/></svg>
<svg class="b" style="left:861.7px;top:44.6px;" width="7" height="7" viewBox="0 0 7 7"><rect x="0.3" y="0.3" width="6.2" height="6.2" rx="0.8" fill="#f0f0f0"/><path d="M1.5,3.4 L2.9,4.8 L5.3,1.9" stroke="#222" stroke-width="0.9" fill="none"/></svg>
<svg class="b" style="left:871.5px;top:42.8px;" width="10" height="10.4" viewBox="0 0 10 10.4"><path d="M1.2,1.4 H8.8 V3.4 H1.2 Z M2,3.4 V9 H8 V3.4" fill="none" stroke="#e0e0e0" stroke-width="0.8"/><rect x="4" y="5" width="2" height="1.4" fill="#e0e0e0"/></svg>
<span class="t" style="top:43.1px;left:884.5px;color:#e0e0e0;">Collection</span>
<div class="b" style="left:864.2px;top:51.5px;width:0.6px;height:31px;background:#707070;border-radius:0px;"></div>
<svg class="b" style="left:862.5px;top:57px;" width="5" height="5" viewBox="0 0 5 5"><path d="M1.2,0.8 V4.2 L4,2.5 Z" fill="#d0d0d0"/></svg>
<div class="b" style="left:864.5px;top:59.3px;width:7px;height:0.6px;background:#707070;border-radius:0px;"></div>
<svg class="b" style="left:871.5px;top:54.5px;" width="10" height="10" viewBox="0 0 10 10"><circle cx="3" cy="2.6" r="1.7" fill="#e8984a"/><circle cx="6.6" cy="2.6" r="1.7" fill="#e8984a"/><path d="M1.2,4.4 H7.4 V8.2 H1.2 Z M7.6,5.4 L9.4,4.4 V8.2 L7.6,7.2 Z" fill="#e8984a"/></svg>
<span class="t" style="top:54.6px;left:884.5px;color:#e0e0e0;">Camera</span>
<div class="b" style="left:919px;top:54px;width:11.5px;height:10.6px;background:#467c6c;border-radius:2.4px;"></div>
<svg class="b" style="left:920px;top:54.6px;" width="10" height="10" viewBox="0 0 10 10"><circle cx="3.4" cy="3.2" r="1.6" fill="none" stroke="#64d9b5" stroke-width="0.7"/><circle cx="6.8" cy="3.2" r="1.6" fill="none" stroke="#64d9b5" stroke-width="0.7"/><path d="M1.8,5 H7.6 V8.2 H1.8 Z M7.8,6 L9.2,5.2 V8 L7.8,7.2" fill="none" stroke="#64d9b5" stroke-width="0.7"/></svg>
<svg class="b" style="left:862.5px;top:68.5px;" width="5" height="5" viewBox="0 0 5 5"><path d="M1.2,0.8 V4.2 L4,2.5 Z" fill="#d0d0d0"/></svg>
<div class="b" style="left:864.5px;top:70.8px;width:7px;height:0.6px;background:#707070;border-radius:0px;"></div>
<svg class="b" style="left:871.5px;top:66px;" width="10" height="10.4" viewBox="0 0 10 10.4"><path d="M5,1 C7.4,1 8.6,2.8 8.6,4.4 C8.6,6 7.2,6.6 7,8 H3 C2.8,6.6 1.4,6 1.4,4.4 C1.4,2.8 2.6,1 5,1 Z" fill="#e8984a"/><rect x="3.4" y="8.5" width="3.2" height="1.2" fill="#e8984a"/><path d="M3.8,4.6 L4.6,6 M6.2,4.6 L5.4,6" stroke="#282828" stroke-width="0.6"/></svg>
<span class="t" style="top:66.1px;left:884.5px;color:#e0e0e0;">Light</span>
<svg class="b" style="left:910.5px;top:66px;" width="10" height="10.4" viewBox="0 0 10 10.4"><circle cx="5" cy="4.6" r="3.4" fill="none" stroke="#2f9d7c" stroke-width="0.7"/><circle cx="5" cy="4.2" r="0.9" fill="#2f9d7c"/><path d="M5,5 V9.4" stroke="#2f9d7c" stroke-width="0.7"/></svg>
<div class="b" style="left:836px;top:76.7px;width:164px;height:11.5px;background:#304e86;border-radius:0px;"></div>
<svg class="b" style="left:862.5px;top:80px;" width="5" height="5" viewBox="0 0 5 5"><path d="M1.2,0.8 V4.2 L4,2.5 Z" fill="#e6e6e6"/></svg>
<div class="b" style="left:871px;top:77.4px;width:11px;height:10.2px;background:rgba(255,255,255,0.22);border-radius:2px;"></div>
<svg class="b" style="left:871.5px;top:77.5px;" width="10" height="10.4" viewBox="0 0 10 10.4"><path d="M1.7,2.2 H8.3 L5,8.4 Z" fill="none" stroke="#f2aa68" stroke-width="1.6" stroke-linejoin="round"/></svg>
<span class="t" style="top:77.6px;left:884.5px;color:#f2dcb8;">red-3dc-sculpt-mesh</span>
<svg class="b" style="left:956.5px;top:77.3px;" width="10" height="10.4" viewBox="0 0 10 10.4"><path d="M2,2 H8 L5,8.4 Z" fill="none" stroke="#2ccbe0" stroke-width="0.8"/><circle cx="2" cy="2" r="1.25" fill="#304e86" stroke="#2ccbe0" stroke-width="0.7"/><circle cx="8" cy="2" r="1.25" fill="#304e86" stroke="#2ccbe0" stroke-width="0.7"/><circle cx="5" cy="8.4" r="1.25" fill="#304e86" stroke="#2ccbe0" stroke-width="0.7"/></svg>
<svg class="b" style="left:861.7px;top:90.6px;" width="7" height="7" viewBox="0 0 7 7"><rect x="0.3" y="0.3" width="6.2" height="6.2" rx="0.8" fill="#f0f0f0"/><path d="M1.5,3.4 L2.9,4.8 L5.3,1.9" stroke="#222" stroke-width="0.9" fill="none"/></svg>
<svg class="b" style="left:871.5px;top:88.8px;" width="10" height="10.4" viewBox="0 0 10 10.4"><path d="M1.2,1.4 H8.8 V3.4 H1.2 Z M2,3.4 V9 H8 V3.4" fill="none" stroke="#e0e0e0" stroke-width="0.8"/><rect x="4" y="5" width="2" height="1.4" fill="#e0e0e0"/></svg>
<span class="t" style="top:89.1px;left:884.5px;color:#e0e0e0;">Collection 2</span>
<svg class="b" style="left:986.3px;top:44.7px;" width="8.4" height="6.7" viewBox="0 0 10 8"><path d="M0.8,4 C2.4,1.2 7.6,1.2 9.2,4 C7.6,6.8 2.4,6.8 0.8,4 Z" fill="none" stroke="#e0e0e0" stroke-width="0.8"/><circle cx="5" cy="4" r="1.3" fill="#e0e0e0"/></svg>
<svg class="b" style="left:986.3px;top:56.2px;" width="8.4" height="6.7" viewBox="0 0 10 8"><path d="M0.8,4 C2.4,1.2 7.6,1.2 9.2,4 C7.6,6.8 2.4,6.8 0.8,4 Z" fill="none" stroke="#e0e0e0" stroke-width="0.8"/><circle cx="5" cy="4" r="1.3" fill="#e0e0e0"/></svg>
<svg class="b" style="left:986.3px;top:67.7px;" width="8.4" height="6.7" viewBox="0 0 10 8"><path d="M0.8,4 C2.4,1.2 7.6,1.2 9.2,4 C7.6,6.8 2.4,6.8 0.8,4 Z" fill="none" stroke="#e0e0e0" stroke-width="0.8"/><circle cx="5" cy="4" r="1.3" fill="#e0e0e0"/></svg>
<svg class="b" style="left:986.3px;top:79.2px;" width="8.4" height="6.7" viewBox="0 0 10 8"><path d="M0.8,4 C2.4,1.2 7.6,1.2 9.2,4 C7.6,6.8 2.4,6.8 0.8,4 Z" fill="none" stroke="#e0e0e0" stroke-width="0.8"/><circle cx="5" cy="4" r="1.3" fill="#e0e0e0"/></svg>
<svg class="b" style="left:986.3px;top:90.7px;" width="8.4" height="6.7" viewBox="0 0 10 8"><path d="M0.8,4 C2.4,1.2 7.6,1.2 9.2,4 C7.6,6.8 2.4,6.8 0.8,4 Z" fill="none" stroke="#e0e0e0" stroke-width="0.8"/><circle cx="5" cy="4" r="1.3" fill="#e0e0e0"/></svg>
<div class="b" style="left:836px;top:107.8px;width:164px;height:429.7px;background:#424242;border-radius:3px 0 0 3px;"></div>
<div class="b" style="left:836px;top:107.8px;width:164px;height:14.2px;background:#383838;border-radius:3px 0 0 0;"></div>
<div class="b" style="left:841.5px;top:110px;width:16.5px;height:9.8px;background:#2a2a2a;border-radius:2px;"></div>
<svg class="b" style="left:843px;top:110.8px;" width="9" height="8.4" viewBox="0 0 9 8.4"><rect x="0.8" y="0.8" width="7" height="2.9" rx="1.4" fill="#e6e6e6"/><rect x="0.8" y="4.7" width="7" height="2.9" rx="1.4" fill="#e6e6e6"/><rect x="3.4" y="1.5" width="3.6" height="1.5" fill="#2a2a2a"/><rect x="1.6" y="5.4" width="3.2" height="1.5" fill="#2a2a2a"/></svg>
<svg class="b" style="left:852px;top:112.3px;" width="6" height="6" viewBox="0 0 6 6"><path d="M1.3,2.2 L3,3.9 L4.7,2.2" fill="none" stroke="#c8c8c8" stroke-width="0.8" stroke-linecap="round" stroke-linejoin="round"/></svg>
<div class="b" style="left:836px;top:122px;width:16.7px;height:415.5px;background:#252525;border-radius:0 0 0 3px;"></div>
<div class="b" style="left:838.5px;top:127.2px;width:14.2px;height:14.6px;background:#424242;border-radius:2px 0 0 2px;"></div>
<div class="b" style="left:838.5px;top:146.7px;width:13.4px;height:14.6px;background:#2d2d2d;border-radius:2px 0 0 2px;"></div>
<div class="b" style="left:838.5px;top:162.2px;width:13.4px;height:14.6px;background:#2d2d2d;border-radius:2px 0 0 2px;"></div>
<div class="b" style="left:838.5px;top:178px;width:13.4px;height:14.6px;background:#2d2d2d;border-radius:2px 0 0 2px;"></div>
<div class="b" style="left:838.5px;top:193.5px;width:13.4px;height:14.6px;background:#2d2d2d;border-radius:2px 0 0 2px;"></div>
<div class="b" style="left:838.5px;top:209px;width:13.4px;height:14.6px;background:#2d2d2d;border-radius:2px 0 0 2px;"></div>
<div class="b" style="left:838.5px;top:229.5px;width:13.4px;height:14.6px;background:#2d2d2d;border-radius:2px 0 0 2px;"></div>
<div class="b" style="left:838.5px;top:245px;width:13.4px;height:14.6px;background:#2d2d2d;border-radius:2px 0 0 2px;"></div>
<div class="b" style="left:838.5px;top:260.5px;width:13.4px;height:14.6px;background:#2d2d2d;border-radius:2px 0 0 2px;"></div>
<div class="b" style="left:838.5px;top:276px;width:13.4px;height:14.6px;background:#2d2d2d;border-radius:2px 0 0 2px;"></div>
<div class="b" style="left:838.5px;top:291.5px;width:13.4px;height:14.6px;background:#2d2d2d;border-radius:2px 0 0 2px;"></div>
<div class="b" style="left:838.5px;top:307px;width:13.4px;height:14.6px;background:#2d2d2d;border-radius:2px 0 0 2px;"></div>
<div class="b" style="left:838.5px;top:322.5px;width:13.4px;height:14.6px;background:#2d2d2d;border-radius:2px 0 0 2px;"></div>
<div class="b" style="left:838.5px;top:343px;width:13.4px;height:14.6px;background:#2d2d2d;border-radius:2px 0 0 2px;"></div>
<svg class="b" style="left:840px;top:129.1px;" width="10" height="10.8" viewBox="0 0 10 10.8"><path d="M2.6,1.4 V5.4 M1.6,5.4 H3.6 V8.4 C3.6,9.6 1.6,9.6 1.6,8.4 Z" fill="#e0e0e0" stroke="#e0e0e0" stroke-width="0.7"/><path d="M5.6,1.4 V3 L6.8,4.4 V9.4 M8.6,1.4 V3 L7.4,4.4" fill="none" stroke="#e0e0e0" stroke-width="1"/></svg>
<svg class="b" style="left:840px;top:148.6px;" width="10" height="10.8" viewBox="0 0 10 10.8"><rect x="1.4" y="3.4" width="7" height="5.4" rx="0.8" fill="none" stroke="#e0e0e0" stroke-width="0.9"/><path d="M3,3.2 V2 H5.6 V3.2 M8.6,5 H9.6 V7.2 H8.6" stroke="#e0e0e0" stroke-width="0.8" fill="none"/></svg>
<svg class="b" style="left:840px;top:164.1px;" width="10" height="10.8" viewBox="0 0 10 10.8"><rect x="1.2" y="1.8" width="7.6" height="2.8" fill="#e0e0e0"/><path d="M2.4,5.4 H7.6 V9 H2.4 Z" fill="none" stroke="#e0e0e0" stroke-width="0.8"/><rect x="4" y="6.4" width="2" height="1.4" fill="#e0e0e0"/></svg>
<svg class="b" style="left:840px;top:179.9px;" width="10" height="10.8" viewBox="0 0 10 10.8"><rect x="1.2" y="3.4" width="6" height="5.4" fill="#888"/><rect x="2.8" y="1.8" width="6.2" height="5.6" fill="#e0e0e0"/><path d="M3.2,7 L5,4.2 L6.2,5.8 L7,5 L8.6,7 Z" fill="#303030"/></svg>
<svg class="b" style="left:840px;top:195.4px;" width="10" height="10.8" viewBox="0 0 10 10.8"><path d="M1.6,8 L3,2.2 L4.4,2.2 L5.4,8 Z" fill="#e0e0e0"/><circle cx="7.4" cy="2.6" r="1.1" fill="#e0e0e0"/><circle cx="6.8" cy="7" r="1.9" fill="none" stroke="#e0e0e0" stroke-width="0.8"/></svg>
<svg class="b" style="left:840px;top:210.9px;" width="10" height="10.8" viewBox="0 0 10 10.8"><circle cx="5" cy="5.4" r="3.7" fill="none" stroke="#d85a70" stroke-width="0.9"/><path d="M2.6,3.6 C3.6,3 5,3.4 4.8,4.6 C4.6,5.6 3.2,5.4 2.6,6.4 Z M5.6,5.6 C6.8,5 7.8,5.8 7.4,7 C7,8 5.8,7.8 5.6,6.8 Z M5.8,2.2 C6.4,3 7.4,3.2 8.2,3.2" fill="#d85a70" stroke="#d85a70" stroke-width="0.5"/></svg>
<svg class="b" style="left:840px;top:231.4px;" width="10" height="10.8" viewBox="0 0 10 10.8"><rect x="2.7" y="3.1" width="4.6" height="4.6" rx="0.5" fill="#eda868"/><path d="M1.2,3 V1.6 H2.6 M7.4,1.6 H8.8 V3 M8.8,7.8 V9.2 H7.4 M2.6,9.2 H1.2 V7.8" fill="none" stroke="#eb9a54" stroke-width="0.7"/></svg>
<svg class="b" style="left:840px;top:246.9px;" width="10" height="10.8" viewBox="0 0 10 10.8"><path d="M7.8,1.4 C6,1 4.6,2.6 5.2,4.4 L1.6,8 C1,9 2,10 3,9.4 L6.6,5.8 C8.4,6.4 10,5 9.6,3.2 L8,4.6 L6.6,4 L6.4,2.8 Z" fill="#6aa0e8"/></svg>
<svg class="b" style="left:840px;top:262.4px;" width="10" height="10.8" viewBox="0 0 10 10.8"><circle cx="2.4" cy="2.4" r="1" fill="#6ab8e8"/><circle cx="7.6" cy="3.6" r="1" fill="#6ab8e8"/><circle cx="4" cy="8.4" r="1" fill="#6ab8e8"/><path d="M2.4,2.4 L7.6,3.6 M2.4,2.4 L4,8.4 M2.4,2.4 L8,8" stroke="#6ab8e8" stroke-width="0.6"/></svg>
<svg class="b" style="left:840px;top:277.9px;" width="10" height="10.8" viewBox="0 0 10 10.8"><circle cx="5" cy="5.4" r="3.4" fill="none" stroke="#6ab0e8" stroke-width="0.8"/><circle cx="5" cy="5.4" r="1.3" fill="#6ab0e8"/><circle cx="8" cy="2.4" r="0.8" fill="#6ab0e8"/></svg>
<svg class="b" style="left:840px;top:293.4px;" width="10" height="10.8" viewBox="0 0 10 10.8"><circle cx="4.4" cy="6" r="3" fill="none" stroke="#6ab0e8" stroke-width="0.8"/><circle cx="4.4" cy="6" r="1.1" fill="#6ab0e8"/><path d="M5.6,3.2 L8,1.6 L9.2,3.4 L7,5" fill="none" stroke="#6ab0e8" stroke-width="0.8"/></svg>
<svg class="b" style="left:840px;top:308.9px;" width="10" height="10.8" viewBox="0 0 10 10.8"><path d="M2,2.4 H8 L5,8.6 Z" fill="none" stroke="#2fd07c" stroke-width="0.8"/><circle cx="2" cy="2.4" r="1.1" fill="#2a2a2a" stroke="#2fd07c" stroke-width="0.7"/><circle cx="8" cy="2.4" r="1.1" fill="#2a2a2a" stroke="#2fd07c" stroke-width="0.7"/><circle cx="5" cy="8.6" r="1.1" fill="#2a2a2a" stroke="#2fd07c" stroke-width="0.7"/></svg>
<svg class="b" style="left:840px;top:324.4px;" width="10" height="10.8" viewBox="0 0 10 10.8"><circle cx="5" cy="5.4" r="3.6" fill="#e8606c"/><path d="M5,5.4 V1.8 A3.6,3.6 0 0 1 8.6,5.4 Z M5,5.4 L2.4,7.8 A3.6,3.6 0 0 0 5,9 Z" fill="#303030"/></svg>
<svg class="b" style="left:840px;top:344.9px;" width="10" height="10.8" viewBox="0 0 10 10.8"><g fill="#e8606c"><rect x="1.4" y="1.8" width="2.4" height="2.4"/><rect x="6.2" y="1.8" width="2.4" height="2.4"/><rect x="3.8" y="4.2" width="2.4" height="2.4"/><rect x="1.4" y="6.6" width="2.4" height="2.4"/><rect x="6.2" y="6.6" width="2.4" height="2.4"/></g><g fill="#a84450"><rect x="3.8" y="1.8" width="2.4" height="2.4"/><rect x="1.4" y="4.2" width="2.4" height="2.4"/><rect x="6.2" y="4.2" width="2.4" height="2.4"/><rect x="3.8" y="6.6" width="2.4" height="2.4"/></g></svg>
<svg class="b" style="left:860.2px;top:125.1px;" width="14" height="14" viewBox="0 0 14 14"><circle cx="7" cy="7" r="6.2" fill="#a0a0a4"/><path d="M1.6,9.8 C3.2,6 6.4,3.2 11,1.8 L12.2,3.8 C8,4.6 4.8,6.8 2.6,10.8 Z" fill="#a9cdf0"/><path d="M5.6,5.2 C7.2,3.8 9,2.8 11,2.3 L11.6,3.3 C9.4,3.7 7.4,4.3 5.6,5.2 Z" fill="#ffffff"/></svg>
<span class="t" style="top:127.1px;left:877px;color:#e0e0e0;">Draw</span>
<div class="b" style="left:853px;top:146.5px;width:147px;height:13.5px;background:#424242;border-radius:0px;"></div>
<svg class="b" style="left:857px;top:150.95px;" width="5" height="5" viewBox="0 0 5 5"><path d="M1,1.3 H4 L2.5,4 Z" fill="#c0c0c0"/></svg>
<span class="t" style="top:148.75px;left:865px;color:#e0e0e0;font-size:6.5px;">Brushes</span>
<svg class="b" style="left:988px;top:151.25px;" width="8" height="4" viewBox="0 0 8 4"><g fill="#5a5a5a"><circle cx="1" cy="1" r="0.45"/><circle cx="2.6" cy="1" r="0.45"/><circle cx="4.2" cy="1" r="0.45"/><circle cx="5.8" cy="1" r="0.45"/><circle cx="1" cy="2.8" r="0.45"/><circle cx="2.6" cy="2.8" r="0.45"/><circle cx="4.2" cy="2.8" r="0.45"/><circle cx="5.8" cy="2.8" r="0.45"/></g></svg>
<div class="b" style="left:853px;top:160px;width:147px;height:88.5px;background:#383838;border-radius:0px;"></div>
<div class="b" style="left:857.5px;top:165px;width:122px;height:67.5px;background:#2e2e2e;border-radius:2px 2px 0 0;"></div>
<svg class="b" style="left:886.8px;top:166.7px;" width="63" height="63" viewBox="0 0 63 63"><defs><radialGradient id="ps" gradientUnits="userSpaceOnUse" cx="18" cy="34" r="52"><stop offset="0" stop-color="#d2d2d2"/><stop offset="0.45" stop-color="#c4c4c4"/><stop offset="0.72" stop-color="#a8a8a8"/><stop offset="0.9" stop-color="#868686"/><stop offset="1" stop-color="#6a6a6a"/></radialGradient>
<filter id="pb" x="-10%" y="-10%" width="120%" height="120%"><feGaussianBlur stdDeviation="1.2"/></filter><filter id="pb2" x="-10%" y="-10%" width="120%" height="120%"><feGaussianBlur stdDeviation="0.6"/></filter><clipPath id="pc"><rect x="0" y="0" width="63" height="63"/></clipPath><clipPath id="pcs"><circle cx="22.5" cy="52.5" r="46"/></clipPath></defs>
<rect width="63" height="63" fill="#000"/>
<g clip-path="url(#pc)"><circle cx="22.5" cy="52.5" r="46" fill="url(#ps)" filter="url(#pb2)"/>
<g clip-path="url(#pcs)"><g filter="url(#pb)">
<path d="M8.5,19.5 C12,16.5 17,14 23,12.8 C28,11.6 33,11.4 36.5,12.8 C40,14.2 41.8,17.5 41,21.5 C40,25.5 36.5,28.5 32,31 C27.5,33.5 23,35 19.5,37.5 C16,40 14.5,43.5 16,47 C17.5,50.5 21,52.5 25,54.5 C31,57.5 38,59.5 44,61 C48,62 51,62.6 55,63.4" fill="none" stroke="#808080" stroke-width="10.5" stroke-linecap="round" transform="translate(1.8,2.4)"/>
<path d="M8.5,19.5 C12,16.5 17,14 23,12.8 C28,11.6 33,11.4 36.5,12.8 C40,14.2 41.8,17.5 41,21.5 C40,25.5 36.5,28.5 32,31 C27.5,33.5 23,35 19.5,37.5 C16,40 14.5,43.5 16,47 C17.5,50.5 21,52.5 25,54.5 C31,57.5 38,59.5 44,61 C48,62 51,62.6 55,63.4" fill="none" stroke="#c4c4c4" stroke-width="10" stroke-linecap="round"/>
<path d="M8.5,19.5 C12,16.5 17,14 23,12.8 C28,11.6 33,11.4 36.5,12.8 C40,14.2 41.8,17.5 41,21.5 C40,25.5 36.5,28.5 32,31 C27.5,33.5 23,35 19.5,37.5 C16,40 14.5,43.5 16,47 C17.5,50.5 21,52.5 25,54.5 C31,57.5 38,59.5 44,61 C48,62 51,62.6 55,63.4" fill="none" stroke="#dedede" stroke-width="5" stroke-linecap="round" transform="translate(-0.9,-1.2)"/>
</g></g></g></svg>
<div class="b" style="left:857.5px;top:233px;width:72.5px;height:10.3px;background:#1d1d1d;border-radius:0 0 0 2px;"></div>
<span class="t" style="top:233.3px;left:861px;">SculptDraw</span>
<div class="b" style="left:930.5px;top:233px;width:14.5px;height:10.3px;background:#595959;border-radius:0px;"></div>
<span class="t" style="top:233.3px;left:887.7px;width:100px;text-align:center;color:#e6e6e6;">2</span>
<div class="b" style="left:945.5px;top:233px;width:11.5px;height:10.3px;background:#5680c2;border-radius:0px;"></div>
<svg class="b" style="left:946.3px;top:233.6px;" width="10" height="9.4" viewBox="0 0 10 9.4"><path d="M5,0.8 L8.4,2 V5 C8.4,7 6.6,8.2 5,8.8 C3.4,8.2 1.6,7 1.6,5 V2 Z" fill="#ffffff"/><path d="M3.2,4.6 L4.5,6 L7,3.2" stroke="#5680c2" stroke-width="0.9" fill="none"/></svg>
<div class="b" style="left:957.5px;top:233px;width:10.5px;height:10.3px;background:#595959;border-radius:0px;"></div>
<svg class="b" style="left:958px;top:233.8px;" width="9" height="9" viewBox="0 0 9 9"><path d="M1.5,3 V7.5 H6" fill="none" stroke="#e0e0e0" stroke-width="0.9"/><path d="M3,1.5 H6 L7.5,3 V6 H3 Z" fill="none" stroke="#e0e0e0" stroke-width="0.9"/></svg>
<div class="b" style="left:968.5px;top:233px;width:11px;height:10.3px;background:#4f4f4f;border-radius:0 0 2px 0;"></div>
<svg class="b" style="left:970.5px;top:234.8px;" width="7" height="7" viewBox="0 0 7 7"><path d="M1.3,1.3 L5.7,5.7 M5.7,1.3 L1.3,5.7" stroke="#e0e0e0" stroke-width="0.8"/></svg>
<div class="b" style="left:985px;top:165px;width:10.5px;height:10.3px;background:#2c2c2c;border-radius:2px;"></div>
<svg class="b" style="left:987.2px;top:167.4px;" width="6" height="6" viewBox="0 0 6 6"><path d="M1.3,2.2 L3,3.9 L4.7,2.2" fill="none" stroke="#c8c8c8" stroke-width="0.8" stroke-linecap="round" stroke-linejoin="round"/></svg>
<div class="b" style="left:985px;top:177.3px;width:10.5px;height:10.6px;background:#595959;border-radius:2px;"></div>
<svg class="b" style="left:985.6px;top:178px;" width="9.4" height="9.4" viewBox="0 0 9.4 9.4"><rect x="1.2" y="1.2" width="7" height="7" fill="none" stroke="#e6e6e6" stroke-width="0.8"/><path d="M1.8,7.4 L4,4 L5.6,6 L6.4,5.2 L7.8,7.4 Z" fill="#e6e6e6"/><circle cx="6.4" cy="3" r="0.8" fill="#e6e6e6"/></svg>
<div class="b" style="left:853px;top:248.5px;width:147px;height:13.5px;background:#424242;border-radius:0px;"></div>
<svg class="b" style="left:857px;top:252.95px;" width="5" height="5" viewBox="0 0 5 5"><path d="M1,1.3 H4 L2.5,4 Z" fill="#c0c0c0"/></svg>
<span class="t" style="top:250.75px;left:865px;color:#e0e0e0;font-size:6.5px;">Brush Settings</span>
<svg class="b" style="left:988px;top:253.25px;" width="8" height="4" viewBox="0 0 8 4"><g fill="#5a5a5a"><circle cx="1" cy="1" r="0.45"/><circle cx="2.6" cy="1" r="0.45"/><circle cx="4.2" cy="1" r="0.45"/><circle cx="5.8" cy="1" r="0.45"/><circle cx="1" cy="2.8" r="0.45"/><circle cx="2.6" cy="2.8" r="0.45"/><circle cx="4.2" cy="2.8" r="0.45"/><circle cx="5.8" cy="2.8" r="0.45"/></g></svg>
<div class="b" style="left:853px;top:262px;width:147px;height:116px;background:#383838;border-radius:0px;"></div>
<span class="t" style="top:266.8px;right:78.5px;color:#e0e0e0;">Radius</span>
<div class="b" style="left:926.5px;top:266.5px;width:45.7px;height:10.4px;background:#595959;border-radius:2px 0 0 2px;"></div>
<span class="t" style="top:266.8px;left:899px;width:100px;text-align:center;">16 px</span>
<div class="b" style="left:972.7px;top:266.5px;width:11px;height:10.4px;background:#595959;border-radius:0px;"></div>
<svg class="b" style="left:973.2px;top:267px;" width="10" height="9.5" viewBox="0 0 10 9.5"><circle cx="3.8" cy="6.2" r="3.1" fill="#e6e6e6" opacity="0.38"/><circle cx="3.8" cy="6.2" r="1.9" fill="none" stroke="#e6e6e6" stroke-width="0.5" opacity="0.4"/><path d="M4.7,4.8 L8.3,1.7" stroke="#e6e6e6" stroke-width="1.7" stroke-linecap="round"/><circle cx="4" cy="5.7" r="0.5" fill="#383838"/></svg>
<div class="b" style="left:984.2px;top:266.5px;width:11px;height:10.4px;background:#5680c2;border-radius:0 2px 2px 0;"></div>
<svg class="b" style="left:985.2px;top:267px;" width="9" height="9.6" viewBox="0 0 9 9.6"><path d="M2,1.2 V4 M1,4 H3 V5.4 H1 Z M2,5.4 V8.6" stroke="#fff" stroke-width="0.9" fill="#fff"/><path d="M5,1.2 V3 L6.2,4.4 V8.6 M7.6,1.2 V3 L6.6,4.4" stroke="#fff" stroke-width="0.9" fill="none"/></svg>
<span class="t" style="top:279.6px;right:78.5px;color:#e0e0e0;">Radius Unit</span>
<div class="b" style="left:926.5px;top:279.2px;width:33.7px;height:10.4px;background:#5680c2;border-radius:2px 0 0 2px;"></div>
<span class="t" style="top:279.5px;left:893.3px;width:100px;text-align:center;color:#fff;">View</span>
<div class="b" style="left:960.7px;top:279.2px;width:34.5px;height:10.4px;background:#595959;border-radius:0 2px 2px 0;"></div>
<span class="t" style="top:279.5px;left:928px;width:100px;text-align:center;">Scene</span>
<span class="t" style="top:296.1px;right:78.5px;color:#e0e0e0;">Strength</span>
<div class="b" style="left:926.5px;top:295.7px;width:45.7px;height:10.4px;background:#595959;border-radius:2px 0 0 2px;"></div>
<div class="b" style="left:926.5px;top:295.7px;width:31.8px;height:10.4px;background:#5680c2;border-radius:2px 0 0 2px;"></div>
<span class="t" style="top:296px;left:899px;width:100px;text-align:center;color:#fff;">0.699</span>
<div class="b" style="left:972.7px;top:295.7px;width:11px;height:10.4px;background:#5680c2;border-radius:0px;"></div>
<svg class="b" style="left:973.2px;top:296.2px;" width="10" height="9.5" viewBox="0 0 10 9.5"><circle cx="3.8" cy="6.2" r="3.1" fill="#ffffff" opacity="0.38"/><circle cx="3.8" cy="6.2" r="1.9" fill="none" stroke="#ffffff" stroke-width="0.5" opacity="0.4"/><path d="M4.7,4.8 L8.3,1.7" stroke="#ffffff" stroke-width="1.7" stroke-linecap="round"/><circle cx="4" cy="5.7" r="0.5" fill="#383838"/></svg>
<div class="b" style="left:984.2px;top:295.7px;width:11px;height:10.4px;background:#5680c2;border-radius:0 2px 2px 0;"></div>
<svg class="b" style="left:985.2px;top:296.2px;" width="9" height="9.6" viewBox="0 0 9 9.6"><path d="M2,1.2 V4 M1,4 H3 V5.4 H1 Z M2,5.4 V8.6" stroke="#fff" stroke-width="0.9" fill="#fff"/><path d="M5,1.2 V3 L6.2,4.4 V8.6 M7.6,1.2 V3 L6.6,4.4" stroke="#fff" stroke-width="0.9" fill="none"/></svg>
<span class="t" style="top:312.4px;right:78.5px;color:#e0e0e0;">Direction</span>
<div class="b" style="left:926.5px;top:312px;width:33.7px;height:10.4px;background:#5680c2;border-radius:2px 0 0 2px;"></div>
<svg class="b" style="left:929.5px;top:313.8px;" width="7" height="7" viewBox="0 0 7 7"><path d="M3.5,0.9 V6.1 M0.9,3.5 H6.1" stroke="#fff" stroke-width="0.8"/></svg>
<span class="t" style="top:312.3px;left:942px;color:#fff;">Add</span>
<div class="b" style="left:960.7px;top:312px;width:34.5px;height:10.4px;background:#595959;border-radius:0 2px 2px 0;"></div>
<svg class="b" style="left:962.5px;top:313.8px;" width="7" height="7" viewBox="0 0 7 7"><path d="M1.2,3.5 H5.8" stroke="#e0e0e0" stroke-width="0.8"/></svg>
<span class="t" style="top:312.3px;left:972.5px;">Subtr...</span>
<span class="t" style="top:325.3px;right:78.5px;color:#e0e0e0;">Normal Radius</span>
<div class="b" style="left:926.5px;top:325px;width:68.7px;height:10.4px;background:#595959;border-radius:2px;"></div>
<div class="b" style="left:926.5px;top:325px;width:16.5px;height:10.4px;background:#5680c2;border-radius:2px 0 0 2px;"></div>
<span class="t" style="top:325.3px;left:910.5px;width:100px;text-align:center;">0.500</span>
<span class="t" style="top:337.8px;right:78.5px;color:#e0e0e0;">Hardness</span>
<div class="b" style="left:926.5px;top:337.5px;width:68.7px;height:10.4px;background:#595959;border-radius:2px;"></div>
<span class="t" style="top:337.8px;left:910.5px;width:100px;text-align:center;">0.000</span>
<span class="t" style="top:350.3px;right:78.5px;color:#e0e0e0;">Autosmooth</span>
<div class="b" style="left:926.5px;top:350px;width:57.5px;height:10.4px;background:#5680c2;border-radius:2px 0 0 2px;"></div>
<span class="t" style="top:350.3px;left:905.5px;width:100px;text-align:center;color:#fff;">1.000</span>
<div class="b" style="left:984.5px;top:350px;width:10.7px;height:10.4px;background:#595959;border-radius:0 2px 2px 0;"></div>
<svg class="b" style="left:985px;top:350.5px;" width="10" height="9.5" viewBox="0 0 10 9.5"><circle cx="3.8" cy="6.2" r="3.1" fill="#e6e6e6" opacity="0.38"/><circle cx="3.8" cy="6.2" r="1.9" fill="none" stroke="#e6e6e6" stroke-width="0.5" opacity="0.4"/><path d="M4.7,4.8 L8.3,1.7" stroke="#e6e6e6" stroke-width="1.7" stroke-linecap="round"/><circle cx="4" cy="5.7" r="0.5" fill="#383838"/></svg>
<span class="t" style="top:362.8px;right:78.5px;color:#e0e0e0;">Topology Rake</span>
<div class="b" style="left:926.5px;top:362.5px;width:68.7px;height:10.4px;background:#5680c2;border-radius:2px;"></div>
<span class="t" style="top:362.8px;left:910.5px;width:100px;text-align:center;color:#fff;">1.000</span>
<div class="b" style="left:853px;top:378px;width:147px;height:159.5px;background:#383838;border-radius:0px;"></div>
<svg class="b" style="left:864.5px;top:382.2px;" width="5" height="5" viewBox="0 0 5 5"><path d="M1,1.3 H4 L2.5,4 Z" fill="#c0c0c0"/></svg>
<span class="t" style="top:379.6px;left:873px;color:#e0e0e0;">Advanced</span>
<div class="b" style="left:853px;top:391px;width:147px;height:137px;background:#303030;border-radius:0px;"></div>
<span class="t" style="top:396.1px;right:19px;color:#e0e0e0;">Topology Auto-masking</span>
<div class="b" style="left:986px;top:397px;width:8px;height:8px;background:#666666;border-radius:1.6px;"></div>
<span class="t" style="top:408.6px;right:19px;color:#e0e0e0;">Face Sets Auto-masking</span>
<div class="b" style="left:986px;top:409.5px;width:8px;height:8px;background:#666666;border-radius:1.6px;"></div>
<span class="t" style="top:421.1px;right:19px;color:#e0e0e0;">Mesh Boundary Auto-masking</span>
<div class="b" style="left:986px;top:422px;width:8px;height:8px;background:#666666;border-radius:1.6px;"></div>
<span class="t" style="top:433.6px;right:19px;color:#e0e0e0;">Face Sets Boundary Automasking</span>
<div class="b" style="left:986px;top:434.5px;width:8px;height:8px;background:#666666;border-radius:1.6px;"></div>
<span class="t" style="top:446.1px;right:78.5px;color:#e0e0e0;">Propagation Steps</span>
<div class="b" style="left:926.5px;top:445.7px;width:68.7px;height:10.4px;background:#595959;border-radius:2px;"></div>
<span class="t" style="top:446.1px;left:910.5px;width:100px;text-align:center;">1</span>
<span class="t" style="top:458.6px;right:78.5px;color:#e0e0e0;">Sculpt Plane</span>
<div class="b" style="left:926.5px;top:458.2px;width:68.7px;height:10.4px;background:#2c2c2c;border-radius:2px;"></div>
<span class="t" style="top:458.6px;left:930px;color:#e0e0e0;">Area Plane</span>
<svg class="b" style="left:988px;top:460.8px;" width="6" height="6" viewBox="0 0 6 6"><path d="M1.3,2.2 L3,3.9 L4.7,2.2" fill="none" stroke="#c8c8c8" stroke-width="0.8" stroke-linecap="round" stroke-linejoin="round"/></svg>
<span class="t" style="top:471.1px;right:19px;color:#e0e0e0;">Original Normal</span>
<div class="b" style="left:986px;top:472px;width:8px;height:8px;background:#666666;border-radius:1.6px;"></div>
<span class="t" style="top:483.6px;right:19px;color:#e0e0e0;">Original Plane</span>
<div class="b" style="left:986px;top:484.5px;width:8px;height:8px;background:#666666;border-radius:1.6px;"></div>
<span class="t" style="top:500.1px;right:19px;color:#e0e0e0;">Accumulate</span>
<div class="b" style="left:986px;top:501px;width:8px;height:8px;background:#666666;border-radius:1.6px;"></div>
<span class="t" style="top:512.6px;right:19px;color:#e0e0e0;">Front Faces Only</span>
<div class="b" style="left:986px;top:513.5px;width:8px;height:8px;background:#5680c2;border-radius:1.6px;"></div>
<svg class="b" style="left:986px;top:513.5px;" width="8" height="8" viewBox="0 0 8 8"><path d="M1.9,4 L3.5,5.7 L6.2,2.2" stroke="#fff" stroke-width="1" fill="none"/></svg>
<div class="b" style="left:853px;top:528px;width:147px;height:9.5px;background:#383838;border-radius:0px;"></div>
<svg class="b" style="left:864.5px;top:532px;" width="5" height="5" viewBox="0 0 5 5"><path d="M1.3,1 V4 L4,2.5 Z" fill="#c0c0c0"/></svg>
<span class="t" style="top:529.6px;left:873px;color:#e0e0e0;">Texture</span>
<span class="wm" style="left:919.7px;top:410.4px;font-size:47px;line-height:64px;color:#1c1c96;opacity:0.7;font-weight:200">氷</span>
<span class="wm" style="left:914.3px;top:466.8px;font-size:55px;line-height:64px;background:linear-gradient(#e8d020 12%,#e89a20 45%,#c0301c 88%);-webkit-background-clip:text;background-clip:text;color:transparent;opacity:0.8;font-weight:200">火</span>
<div class="b" style="left:0px;top:537.5px;width:1000px;height:11.5px;background:#303030;border-radius:0px;"></div>
<svg class="b" style="left:5.5px;top:538.8px;" width="8" height="10" viewBox="0 0 8 10"><rect x="1.2" y="1" width="5.6" height="8" rx="1.6" fill="none" stroke="#d0d0d0" stroke-width="0.8"/><path d="M1.6,1.4 H4 V4.4 H1.6 Z" fill="#d0d0d0"/></svg>
<span class="t" style="top:539.2px;left:19px;color:#bcbcbc;">Sculpt</span>
<svg class="b" style="left:42.5px;top:538.8px;" width="11" height="10" viewBox="0 0 11 10"><rect x="1.2" y="1" width="5.6" height="8" rx="1.6" fill="none" stroke="#d0d0d0" stroke-width="0.8"/><path d="M1.6,1.4 H4 V4.4 H1.6 Z" fill="#d0d0d0"/><path d="M8,2 C9,3 9,5 8,6 M9.4,1.4 C10.6,2.8 10.6,5.2 9.4,6.6" stroke="#d0d0d0" stroke-width="0.6" fill="none"/></svg>
<span class="t" style="top:539.2px;left:57px;color:#bcbcbc;">Move</span>
<svg class="b" style="left:130.5px;top:538.8px;" width="8" height="10" viewBox="0 0 8 10"><rect x="1.2" y="1" width="5.6" height="8" rx="1.6" fill="none" stroke="#d0d0d0" stroke-width="0.8"/><rect x="3.2" y="2" width="1.6" height="3" rx="0.8" fill="#d0d0d0"/></svg>
<span class="t" style="top:539.2px;left:143.5px;color:#bcbcbc;">Rotate View</span>
<svg class="b" style="left:256px;top:538.8px;" width="8" height="10" viewBox="0 0 8 10"><rect x="1.2" y="1" width="5.6" height="8" rx="1.6" fill="none" stroke="#d0d0d0" stroke-width="0.8"/><path d="M4,1.4 H6.4 V4.4 H4 Z" fill="#d0d0d0"/></svg>
<span class="t" style="top:539.2px;left:268px;color:#bcbcbc;">Sculpt Context Menu</span>
<span class="t" style="top:539.2px;right:19.5px;color:#b4b4b4;font-size:5.76px;">red-3dc-sculpt-mesh | Verts:886,395 | Tris:1,772,602 | 2.83.4</span>
</div>
</body></html>
